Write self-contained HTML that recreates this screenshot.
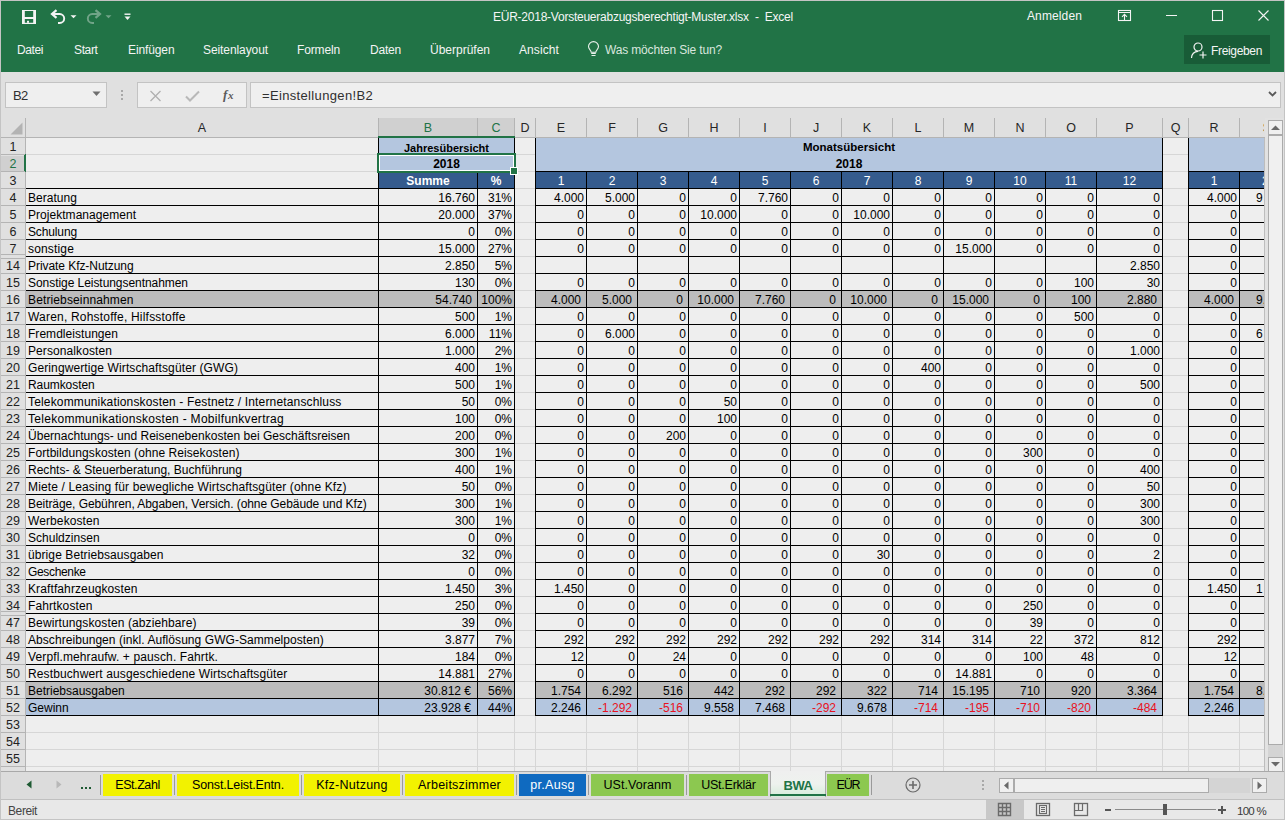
<!DOCTYPE html>
<html><head><meta charset="utf-8"><title>Excel</title>
<style>
html,body{margin:0;padding:0;}
body{width:1285px;height:820px;position:relative;overflow:hidden;font-family:"Liberation Sans", sans-serif;background:#c4c4c4;}
body>div,body>svg{position:absolute;}
body>div{white-space:pre;}
</style></head><body>
<div style="left:0px;top:0px;width:1285px;height:820px;background:#c4c4c4"></div>
<div style="left:1px;top:1px;width:1283px;height:71px;background:#217346"></div>
<div style="left:1px;top:72px;width:1283px;height:46px;background:#e0e0e0"></div>
<svg style="left:22px;top:10px;" width="14" height="14" viewBox="0 0 14 14"><path fill-rule="evenodd" d="M0 0H14V14H0ZM2.8 1.1H11.2V6.9H2.8ZM2.8 9H11.2V12.8H2.8Z" fill="#f4f4f4"/><rect x="5" y="10.8" width="2" height="2" fill="#f4f4f4"/></svg>
<svg style="left:50px;top:9px;" width="17" height="16" viewBox="0 0 17 16"><path d="M6.5 1.2L2 5L6.5 8.8" fill="none" stroke="#f4f4f4" stroke-width="2.2"/><path d="M2.5 5H9.7A4.5 4.5 0 0 1 9.7 14H8" fill="none" stroke="#f4f4f4" stroke-width="1.9"/></svg>
<svg style="left:70px;top:15px;" width="7" height="4" viewBox="0 0 7 4"><path d="M0.5 0.3H6.5L3.5 3.3Z" fill="#f4f4f4"/></svg>
<svg style="left:85px;top:9px;" width="17" height="16" viewBox="0 0 17 16"><g opacity="0.38"><path d="M10.5 1.2L15 5L10.5 8.8" fill="none" stroke="#f4f4f4" stroke-width="2.2"/><path d="M14.5 5H7.3A4.5 4.5 0 0 0 7.3 14H9" fill="none" stroke="#f4f4f4" stroke-width="1.9"/></g></svg>
<svg style="left:105px;top:15px;" width="7" height="4" viewBox="0 0 7 4"><path d="M0.5 0.3H6.5L3.5 3.3Z" fill="#f4f4f4" opacity="0.38"/></svg>
<svg style="left:124px;top:13px;" width="7" height="8" viewBox="0 0 7 8"><rect x="0.5" y="0.5" width="6" height="1.4" fill="#f4f4f4"/><path d="M0.5 3.5H6.5L3.5 7Z" fill="#f4f4f4"/></svg>
<div id="t1" style="letter-spacing:-0.241px;left:493px;top:9px;font-size:12px;line-height:17px;color:#f6f6f6;">EÜR-2018-Vorsteuerabzugsberechtigt-Muster.xlsx  -  Excel</div>
<div id="t2" style="letter-spacing:0.119px;left:1027px;top:8px;font-size:12px;line-height:17px;color:#f6f6f6;">Anmelden</div>
<svg style="left:1117px;top:9px;" width="15" height="13" viewBox="0 0 15 13"><rect x="1.5" y="1.5" width="12" height="10" fill="none" stroke="#f4f4f4" stroke-width="1.1"/><path d="M1.5 3.5H13.5" stroke="#f4f4f4" stroke-width="1"/><path d="M7.5 11V5.5M5 7.8L7.5 5.3L10 7.8" fill="none" stroke="#f4f4f4" stroke-width="1.1"/></svg>
<div style="left:1166px;top:15px;width:11px;height:1px;background:#f4f4f4"></div>
<svg style="left:1211px;top:9px;" width="13" height="13" viewBox="0 0 13 13"><rect x="1.5" y="1.5" width="10" height="10" fill="none" stroke="#f4f4f4" stroke-width="1.1"/></svg>
<svg style="left:1257px;top:9px;" width="13" height="13" viewBox="0 0 13 13"><path d="M1.5 1.5L11.5 11.5M11.5 1.5L1.5 11.5" stroke="#f4f4f4" stroke-width="1.1"/></svg>
<div id="t3" style="letter-spacing:-0.403px;left:17px;top:42px;font-size:12px;line-height:17px;color:#f4f4f4;">Datei</div>
<div id="t4" style="letter-spacing:-0.369px;left:74px;top:42px;font-size:12px;line-height:17px;color:#f4f4f4;">Start</div>
<div id="t5" style="letter-spacing:-0.109px;left:128px;top:42px;font-size:12px;line-height:17px;color:#f4f4f4;">Einfügen</div>
<div id="t6" style="letter-spacing:-0.087px;left:203px;top:42px;font-size:12px;line-height:17px;color:#f4f4f4;">Seitenlayout</div>
<div id="t7" style="letter-spacing:-0.145px;left:297px;top:42px;font-size:12px;line-height:17px;color:#f4f4f4;">Formeln</div>
<div id="t8" style="letter-spacing:-0.206px;left:370px;top:42px;font-size:12px;line-height:17px;color:#f4f4f4;">Daten</div>
<div id="t9" style="letter-spacing:-0.005px;left:430px;top:42px;font-size:12px;line-height:17px;color:#f4f4f4;">Überprüfen</div>
<div id="t10" style="letter-spacing:0.092px;left:519px;top:42px;font-size:12px;line-height:17px;color:#f4f4f4;">Ansicht</div>
<svg style="left:587px;top:41px;" width="13" height="17" viewBox="0 0 13 17"><path d="M4.2 11.2C4.2 9.2 1.5 8.3 1.5 5.6A5 5 0 0 1 11.5 5.6C11.5 8.3 8.8 9.2 8.8 11.2Z" fill="none" stroke="#e8f0ea" stroke-width="1.1"/><path d="M4.2 12.3H8.8M4.5 14.5H8.5" stroke="#e8f0ea" stroke-width="1.2"/></svg>
<div id="t11" style="letter-spacing:-0.164px;left:605px;top:42px;font-size:12px;line-height:17px;color:#d9e6de;">Was möchten Sie tun?</div>
<div style="left:1184px;top:35px;width:86px;height:29px;background:#185c37"></div>
<svg style="left:1190px;top:42px;" width="18" height="17" viewBox="0 0 18 17"><circle cx="8" cy="5" r="4" fill="none" stroke="#f4f4f4" stroke-width="1.2"/><path d="M1.5 16A6.5 6.5 0 0 1 8 9.3" fill="none" stroke="#f4f4f4" stroke-width="1.2"/><path d="M13 9.5V16.5M9.5 13H16.5" stroke="#f4f4f4" stroke-width="1.2"/></svg>
<div id="t12" style="letter-spacing:-0.339px;left:1211px;top:43px;font-size:12px;line-height:17px;color:#f6f6f6;">Freigeben</div>
<div style="left:5px;top:82px;width:102px;height:26px;background:#efefef;border:1px solid #c3c3c3;box-sizing:border-box"></div>
<div id="t13" style="letter-spacing:-0.703px;left:13px;top:87px;font-size:13px;line-height:17px;color:#303030;">B2</div>
<svg style="left:92px;top:91px;" width="9" height="6" viewBox="0 0 9 6"><path d="M0.5 0.5H8.5L4.5 5Z" fill="#6e6e6e"/></svg>
<div style="left:121px;top:90px;width:2px;height:2px;background:#a8a8a8"></div>
<div style="left:121px;top:94px;width:2px;height:2px;background:#a8a8a8"></div>
<div style="left:121px;top:98px;width:2px;height:2px;background:#a8a8a8"></div>
<div style="left:137px;top:82px;width:110px;height:26px;background:#efefef;border:1px solid #c3c3c3;box-sizing:border-box"></div>
<svg style="left:149px;top:90px;" width="13" height="12" viewBox="0 0 13 12"><path d="M1.5 1L11.5 11M11.5 1L1.5 11" stroke="#b0b0b0" stroke-width="1.3"/></svg>
<svg style="left:185px;top:90px;" width="15" height="12" viewBox="0 0 15 12"><path d="M1 6.5L5 10.5L14 1.5" fill="none" stroke="#b8b8b8" stroke-width="2"/></svg>
<div style="left:223px;top:86px;font-size:13px;line-height:17px;color:#5a5a5a;font-family:'Liberation Serif',serif;font-style:italic;font-weight:bold">f</div>
<div style="left:228px;top:87px;font-size:11px;line-height:17px;color:#5a5a5a;font-family:'Liberation Serif',serif;font-style:italic;font-weight:bold">x</div>
<div style="left:250px;top:82px;width:1031px;height:26px;background:#efefef;border:1px solid #c3c3c3;box-sizing:border-box"></div>
<div id="t14" style="letter-spacing:0.343px;left:262px;top:87px;font-size:13px;line-height:17px;color:#303030;">=Einstellungen!B2</div>
<svg style="left:1268px;top:91px;" width="9" height="7" viewBox="0 0 9 7"><path d="M1 1L4.5 4.5L8 1" fill="none" stroke="#5a5a5a" stroke-width="1.8"/></svg>
<div style="left:1px;top:118px;width:1263px;height:19px;background:#e0e0e0"></div>
<div style="left:1px;top:138px;width:24px;height:633px;background:#e0e0e0"></div>
<div style="left:26px;top:138px;width:1238px;height:633px;background:#eeeeee"></div>
<div style="left:1265px;top:118px;width:19px;height:681px;background:#e2e2e2"></div>
<div style="left:379px;top:118px;width:135px;height:19px;background:#d0d0d0"></div>
<div style="left:1px;top:156px;width:23px;height:16px;background:#d0d0d0"></div>
<svg style="left:10px;top:122px;" width="13" height="13" viewBox="0 0 13 13"><path d="M12.5 0.5V12.5H0.5Z" fill="#b3b3b3"/></svg>
<div style="left:378px;top:118px;width:1px;height:19px;background:#b4b4b4"></div>
<div style="left:477px;top:118px;width:1px;height:19px;background:#b4b4b4"></div>
<div style="left:514px;top:118px;width:1px;height:19px;background:#b4b4b4"></div>
<div style="left:535px;top:118px;width:1px;height:19px;background:#b4b4b4"></div>
<div style="left:586px;top:118px;width:1px;height:19px;background:#b4b4b4"></div>
<div style="left:637px;top:118px;width:1px;height:19px;background:#b4b4b4"></div>
<div style="left:688px;top:118px;width:1px;height:19px;background:#b4b4b4"></div>
<div style="left:739px;top:118px;width:1px;height:19px;background:#b4b4b4"></div>
<div style="left:790px;top:118px;width:1px;height:19px;background:#b4b4b4"></div>
<div style="left:841px;top:118px;width:1px;height:19px;background:#b4b4b4"></div>
<div style="left:892px;top:118px;width:1px;height:19px;background:#b4b4b4"></div>
<div style="left:943px;top:118px;width:1px;height:19px;background:#b4b4b4"></div>
<div style="left:994px;top:118px;width:1px;height:19px;background:#b4b4b4"></div>
<div style="left:1045px;top:118px;width:1px;height:19px;background:#b4b4b4"></div>
<div style="left:1096px;top:118px;width:1px;height:19px;background:#b4b4b4"></div>
<div style="left:1162px;top:118px;width:1px;height:19px;background:#b4b4b4"></div>
<div style="left:1188px;top:118px;width:1px;height:19px;background:#b4b4b4"></div>
<div style="left:1239px;top:118px;width:1px;height:19px;background:#b4b4b4"></div>
<div style="left:25px;top:118px;width:1px;height:653px;background:#b4b4b4"></div>
<div style="left:1px;top:137px;width:1264px;height:1px;background:#b4b4b4"></div>
<div style="left:378px;top:136px;width:137px;height:2px;background:#217346"></div>
<div style="left:24px;top:154px;width:2px;height:18px;background:#217346"></div>
<div style="left:1px;top:154px;width:24px;height:1px;background:#b4b4b4"></div>
<div style="left:1px;top:139px;font-size:12.5px;line-height:17px;color:#222;width:24px;text-align:center;">1</div>
<div style="left:1px;top:171px;width:24px;height:1px;background:#b4b4b4"></div>
<div style="left:1px;top:156px;font-size:12.5px;line-height:17px;color:#217346;width:24px;text-align:center;">2</div>
<div style="left:1px;top:188px;width:24px;height:1px;background:#b4b4b4"></div>
<div style="left:1px;top:173px;font-size:12.5px;line-height:17px;color:#222;width:24px;text-align:center;">3</div>
<div style="left:1px;top:205px;width:24px;height:1px;background:#b4b4b4"></div>
<div style="left:1px;top:190px;font-size:12.5px;line-height:17px;color:#222;width:24px;text-align:center;">4</div>
<div style="left:1px;top:222px;width:24px;height:1px;background:#b4b4b4"></div>
<div style="left:1px;top:207px;font-size:12.5px;line-height:17px;color:#222;width:24px;text-align:center;">5</div>
<div style="left:1px;top:239px;width:24px;height:1px;background:#b4b4b4"></div>
<div style="left:1px;top:224px;font-size:12.5px;line-height:17px;color:#222;width:24px;text-align:center;">6</div>
<div style="left:1px;top:254px;width:24px;height:1px;background:#b4b4b4"></div>
<div style="left:1px;top:258px;width:24px;height:1px;background:#b4b4b4"></div>
<div style="left:1px;top:241px;font-size:12.5px;line-height:17px;color:#222;width:24px;text-align:center;">7</div>
<div style="left:1px;top:273px;width:24px;height:1px;background:#b4b4b4"></div>
<div style="left:1px;top:258px;font-size:12.5px;line-height:17px;color:#222;width:24px;text-align:center;">14</div>
<div style="left:1px;top:290px;width:24px;height:1px;background:#b4b4b4"></div>
<div style="left:1px;top:275px;font-size:12.5px;line-height:17px;color:#222;width:24px;text-align:center;">15</div>
<div style="left:1px;top:307px;width:24px;height:1px;background:#b4b4b4"></div>
<div style="left:1px;top:292px;font-size:12.5px;line-height:17px;color:#222;width:24px;text-align:center;">16</div>
<div style="left:1px;top:324px;width:24px;height:1px;background:#b4b4b4"></div>
<div style="left:1px;top:309px;font-size:12.5px;line-height:17px;color:#222;width:24px;text-align:center;">17</div>
<div style="left:1px;top:341px;width:24px;height:1px;background:#b4b4b4"></div>
<div style="left:1px;top:326px;font-size:12.5px;line-height:17px;color:#222;width:24px;text-align:center;">18</div>
<div style="left:1px;top:358px;width:24px;height:1px;background:#b4b4b4"></div>
<div style="left:1px;top:343px;font-size:12.5px;line-height:17px;color:#222;width:24px;text-align:center;">19</div>
<div style="left:1px;top:375px;width:24px;height:1px;background:#b4b4b4"></div>
<div style="left:1px;top:360px;font-size:12.5px;line-height:17px;color:#222;width:24px;text-align:center;">20</div>
<div style="left:1px;top:392px;width:24px;height:1px;background:#b4b4b4"></div>
<div style="left:1px;top:377px;font-size:12.5px;line-height:17px;color:#222;width:24px;text-align:center;">21</div>
<div style="left:1px;top:409px;width:24px;height:1px;background:#b4b4b4"></div>
<div style="left:1px;top:394px;font-size:12.5px;line-height:17px;color:#222;width:24px;text-align:center;">22</div>
<div style="left:1px;top:426px;width:24px;height:1px;background:#b4b4b4"></div>
<div style="left:1px;top:411px;font-size:12.5px;line-height:17px;color:#222;width:24px;text-align:center;">23</div>
<div style="left:1px;top:443px;width:24px;height:1px;background:#b4b4b4"></div>
<div style="left:1px;top:428px;font-size:12.5px;line-height:17px;color:#222;width:24px;text-align:center;">24</div>
<div style="left:1px;top:460px;width:24px;height:1px;background:#b4b4b4"></div>
<div style="left:1px;top:445px;font-size:12.5px;line-height:17px;color:#222;width:24px;text-align:center;">25</div>
<div style="left:1px;top:477px;width:24px;height:1px;background:#b4b4b4"></div>
<div style="left:1px;top:462px;font-size:12.5px;line-height:17px;color:#222;width:24px;text-align:center;">26</div>
<div style="left:1px;top:494px;width:24px;height:1px;background:#b4b4b4"></div>
<div style="left:1px;top:479px;font-size:12.5px;line-height:17px;color:#222;width:24px;text-align:center;">27</div>
<div style="left:1px;top:511px;width:24px;height:1px;background:#b4b4b4"></div>
<div style="left:1px;top:496px;font-size:12.5px;line-height:17px;color:#222;width:24px;text-align:center;">28</div>
<div style="left:1px;top:528px;width:24px;height:1px;background:#b4b4b4"></div>
<div style="left:1px;top:513px;font-size:12.5px;line-height:17px;color:#222;width:24px;text-align:center;">29</div>
<div style="left:1px;top:545px;width:24px;height:1px;background:#b4b4b4"></div>
<div style="left:1px;top:530px;font-size:12.5px;line-height:17px;color:#222;width:24px;text-align:center;">30</div>
<div style="left:1px;top:562px;width:24px;height:1px;background:#b4b4b4"></div>
<div style="left:1px;top:547px;font-size:12.5px;line-height:17px;color:#222;width:24px;text-align:center;">31</div>
<div style="left:1px;top:579px;width:24px;height:1px;background:#b4b4b4"></div>
<div style="left:1px;top:564px;font-size:12.5px;line-height:17px;color:#222;width:24px;text-align:center;">32</div>
<div style="left:1px;top:596px;width:24px;height:1px;background:#b4b4b4"></div>
<div style="left:1px;top:581px;font-size:12.5px;line-height:17px;color:#222;width:24px;text-align:center;">33</div>
<div style="left:1px;top:611px;width:24px;height:1px;background:#b4b4b4"></div>
<div style="left:1px;top:615px;width:24px;height:1px;background:#b4b4b4"></div>
<div style="left:1px;top:598px;font-size:12.5px;line-height:17px;color:#222;width:24px;text-align:center;">34</div>
<div style="left:1px;top:630px;width:24px;height:1px;background:#b4b4b4"></div>
<div style="left:1px;top:615px;font-size:12.5px;line-height:17px;color:#222;width:24px;text-align:center;">47</div>
<div style="left:1px;top:647px;width:24px;height:1px;background:#b4b4b4"></div>
<div style="left:1px;top:632px;font-size:12.5px;line-height:17px;color:#222;width:24px;text-align:center;">48</div>
<div style="left:1px;top:664px;width:24px;height:1px;background:#b4b4b4"></div>
<div style="left:1px;top:649px;font-size:12.5px;line-height:17px;color:#222;width:24px;text-align:center;">49</div>
<div style="left:1px;top:681px;width:24px;height:1px;background:#b4b4b4"></div>
<div style="left:1px;top:666px;font-size:12.5px;line-height:17px;color:#222;width:24px;text-align:center;">50</div>
<div style="left:1px;top:698px;width:24px;height:1px;background:#b4b4b4"></div>
<div style="left:1px;top:683px;font-size:12.5px;line-height:17px;color:#222;width:24px;text-align:center;">51</div>
<div style="left:1px;top:715px;width:24px;height:1px;background:#b4b4b4"></div>
<div style="left:1px;top:700px;font-size:12.5px;line-height:17px;color:#222;width:24px;text-align:center;">52</div>
<div style="left:1px;top:732px;width:24px;height:1px;background:#b4b4b4"></div>
<div style="left:1px;top:717px;font-size:12.5px;line-height:17px;color:#222;width:24px;text-align:center;">53</div>
<div style="left:1px;top:749px;width:24px;height:1px;background:#b4b4b4"></div>
<div style="left:1px;top:734px;font-size:12.5px;line-height:17px;color:#222;width:24px;text-align:center;">54</div>
<div style="left:1px;top:766px;width:24px;height:1px;background:#b4b4b4"></div>
<div style="left:1px;top:751px;font-size:12.5px;line-height:17px;color:#222;width:24px;text-align:center;">55</div>
<div style="left:1px;top:771px;width:24px;height:1px;background:#b4b4b4"></div>
<div style="left:26px;top:154px;width:1238px;height:1px;background:#d6d6d6"></div>
<div style="left:26px;top:171px;width:1238px;height:1px;background:#d6d6d6"></div>
<div style="left:26px;top:188px;width:1238px;height:1px;background:#d6d6d6"></div>
<div style="left:26px;top:205px;width:1238px;height:1px;background:#d6d6d6"></div>
<div style="left:26px;top:222px;width:1238px;height:1px;background:#d6d6d6"></div>
<div style="left:26px;top:239px;width:1238px;height:1px;background:#d6d6d6"></div>
<div style="left:26px;top:256px;width:1238px;height:1px;background:#d6d6d6"></div>
<div style="left:26px;top:273px;width:1238px;height:1px;background:#d6d6d6"></div>
<div style="left:26px;top:290px;width:1238px;height:1px;background:#d6d6d6"></div>
<div style="left:26px;top:307px;width:1238px;height:1px;background:#d6d6d6"></div>
<div style="left:26px;top:324px;width:1238px;height:1px;background:#d6d6d6"></div>
<div style="left:26px;top:341px;width:1238px;height:1px;background:#d6d6d6"></div>
<div style="left:26px;top:358px;width:1238px;height:1px;background:#d6d6d6"></div>
<div style="left:26px;top:375px;width:1238px;height:1px;background:#d6d6d6"></div>
<div style="left:26px;top:392px;width:1238px;height:1px;background:#d6d6d6"></div>
<div style="left:26px;top:409px;width:1238px;height:1px;background:#d6d6d6"></div>
<div style="left:26px;top:426px;width:1238px;height:1px;background:#d6d6d6"></div>
<div style="left:26px;top:443px;width:1238px;height:1px;background:#d6d6d6"></div>
<div style="left:26px;top:460px;width:1238px;height:1px;background:#d6d6d6"></div>
<div style="left:26px;top:477px;width:1238px;height:1px;background:#d6d6d6"></div>
<div style="left:26px;top:494px;width:1238px;height:1px;background:#d6d6d6"></div>
<div style="left:26px;top:511px;width:1238px;height:1px;background:#d6d6d6"></div>
<div style="left:26px;top:528px;width:1238px;height:1px;background:#d6d6d6"></div>
<div style="left:26px;top:545px;width:1238px;height:1px;background:#d6d6d6"></div>
<div style="left:26px;top:562px;width:1238px;height:1px;background:#d6d6d6"></div>
<div style="left:26px;top:579px;width:1238px;height:1px;background:#d6d6d6"></div>
<div style="left:26px;top:596px;width:1238px;height:1px;background:#d6d6d6"></div>
<div style="left:26px;top:613px;width:1238px;height:1px;background:#d6d6d6"></div>
<div style="left:26px;top:630px;width:1238px;height:1px;background:#d6d6d6"></div>
<div style="left:26px;top:647px;width:1238px;height:1px;background:#d6d6d6"></div>
<div style="left:26px;top:664px;width:1238px;height:1px;background:#d6d6d6"></div>
<div style="left:26px;top:681px;width:1238px;height:1px;background:#d6d6d6"></div>
<div style="left:26px;top:698px;width:1238px;height:1px;background:#d6d6d6"></div>
<div style="left:26px;top:715px;width:1238px;height:1px;background:#d6d6d6"></div>
<div style="left:26px;top:732px;width:1238px;height:1px;background:#d6d6d6"></div>
<div style="left:26px;top:749px;width:1238px;height:1px;background:#d6d6d6"></div>
<div style="left:26px;top:766px;width:1238px;height:1px;background:#d6d6d6"></div>
<div style="left:378px;top:138px;width:1px;height:633px;background:#d6d6d6"></div>
<div style="left:477px;top:138px;width:1px;height:633px;background:#d6d6d6"></div>
<div style="left:514px;top:138px;width:1px;height:633px;background:#d6d6d6"></div>
<div style="left:535px;top:138px;width:1px;height:633px;background:#d6d6d6"></div>
<div style="left:586px;top:138px;width:1px;height:633px;background:#d6d6d6"></div>
<div style="left:637px;top:138px;width:1px;height:633px;background:#d6d6d6"></div>
<div style="left:688px;top:138px;width:1px;height:633px;background:#d6d6d6"></div>
<div style="left:739px;top:138px;width:1px;height:633px;background:#d6d6d6"></div>
<div style="left:790px;top:138px;width:1px;height:633px;background:#d6d6d6"></div>
<div style="left:841px;top:138px;width:1px;height:633px;background:#d6d6d6"></div>
<div style="left:892px;top:138px;width:1px;height:633px;background:#d6d6d6"></div>
<div style="left:943px;top:138px;width:1px;height:633px;background:#d6d6d6"></div>
<div style="left:994px;top:138px;width:1px;height:633px;background:#d6d6d6"></div>
<div style="left:1045px;top:138px;width:1px;height:633px;background:#d6d6d6"></div>
<div style="left:1096px;top:138px;width:1px;height:633px;background:#d6d6d6"></div>
<div style="left:1162px;top:138px;width:1px;height:633px;background:#d6d6d6"></div>
<div style="left:1188px;top:138px;width:1px;height:633px;background:#d6d6d6"></div>
<div style="left:1239px;top:138px;width:1px;height:633px;background:#d6d6d6"></div>
<div style="left:26px;top:119px;font-size:12.5px;line-height:19px;color:#262626;width:352px;text-align:center;">A</div>
<div style="left:379px;top:119px;font-size:12.5px;line-height:19px;color:#217346;width:98px;text-align:center;">B</div>
<div style="left:478px;top:119px;font-size:12.5px;line-height:19px;color:#217346;width:36px;text-align:center;">C</div>
<div style="left:515px;top:119px;font-size:12.5px;line-height:19px;color:#262626;width:20px;text-align:center;">D</div>
<div style="left:536px;top:119px;font-size:12.5px;line-height:19px;color:#262626;width:50px;text-align:center;">E</div>
<div style="left:587px;top:119px;font-size:12.5px;line-height:19px;color:#262626;width:50px;text-align:center;">F</div>
<div style="left:638px;top:119px;font-size:12.5px;line-height:19px;color:#262626;width:50px;text-align:center;">G</div>
<div style="left:689px;top:119px;font-size:12.5px;line-height:19px;color:#262626;width:50px;text-align:center;">H</div>
<div style="left:740px;top:119px;font-size:12.5px;line-height:19px;color:#262626;width:50px;text-align:center;">I</div>
<div style="left:791px;top:119px;font-size:12.5px;line-height:19px;color:#262626;width:50px;text-align:center;">J</div>
<div style="left:842px;top:119px;font-size:12.5px;line-height:19px;color:#262626;width:50px;text-align:center;">K</div>
<div style="left:893px;top:119px;font-size:12.5px;line-height:19px;color:#262626;width:50px;text-align:center;">L</div>
<div style="left:944px;top:119px;font-size:12.5px;line-height:19px;color:#262626;width:50px;text-align:center;">M</div>
<div style="left:995px;top:119px;font-size:12.5px;line-height:19px;color:#262626;width:50px;text-align:center;">N</div>
<div style="left:1046px;top:119px;font-size:12.5px;line-height:19px;color:#262626;width:50px;text-align:center;">O</div>
<div style="left:1097px;top:119px;font-size:12.5px;line-height:19px;color:#262626;width:65px;text-align:center;">P</div>
<div style="left:1163px;top:119px;font-size:12.5px;line-height:19px;color:#262626;width:25px;text-align:center;">Q</div>
<div style="left:1189px;top:119px;font-size:12.5px;line-height:19px;color:#262626;width:50px;text-align:center;">R</div>
<div style="left:1242px;top:119px;font-size:12.5px;line-height:19px;color:#262626;width:50px;text-align:center;">S</div>
<div style="left:379px;top:138px;width:135px;height:33px;background:#b4c6df"></div>
<div style="left:536px;top:138px;width:626px;height:33px;background:#b4c6df"></div>
<div style="left:1189px;top:138px;width:75px;height:33px;background:#b4c6df"></div>
<div style="left:379px;top:172px;width:135px;height:16px;background:#355b8d"></div>
<div style="left:536px;top:172px;width:626px;height:16px;background:#355b8d"></div>
<div style="left:1189px;top:172px;width:75px;height:16px;background:#355b8d"></div>
<div style="left:26px;top:291px;width:488px;height:16px;background:#bcbcbc"></div>
<div style="left:536px;top:291px;width:626px;height:16px;background:#bcbcbc"></div>
<div style="left:1189px;top:291px;width:75px;height:16px;background:#bcbcbc"></div>
<div style="left:26px;top:682px;width:488px;height:16px;background:#bcbcbc"></div>
<div style="left:536px;top:682px;width:626px;height:16px;background:#bcbcbc"></div>
<div style="left:1189px;top:682px;width:75px;height:16px;background:#bcbcbc"></div>
<div style="left:26px;top:699px;width:488px;height:16px;background:#b4c6df"></div>
<div style="left:536px;top:699px;width:626px;height:16px;background:#b4c6df"></div>
<div style="left:1189px;top:699px;width:75px;height:16px;background:#b4c6df"></div>
<div style="left:26px;top:205px;width:489px;height:1px;background:#000"></div>
<div style="left:26px;top:222px;width:489px;height:1px;background:#000"></div>
<div style="left:26px;top:239px;width:489px;height:1px;background:#000"></div>
<div style="left:26px;top:256px;width:489px;height:1px;background:#000"></div>
<div style="left:26px;top:273px;width:489px;height:1px;background:#000"></div>
<div style="left:26px;top:290px;width:489px;height:1px;background:#000"></div>
<div style="left:26px;top:307px;width:489px;height:1px;background:#000"></div>
<div style="left:26px;top:324px;width:489px;height:1px;background:#000"></div>
<div style="left:26px;top:341px;width:489px;height:1px;background:#000"></div>
<div style="left:26px;top:358px;width:489px;height:1px;background:#000"></div>
<div style="left:26px;top:375px;width:489px;height:1px;background:#000"></div>
<div style="left:26px;top:392px;width:489px;height:1px;background:#000"></div>
<div style="left:26px;top:409px;width:489px;height:1px;background:#000"></div>
<div style="left:26px;top:426px;width:489px;height:1px;background:#000"></div>
<div style="left:26px;top:443px;width:489px;height:1px;background:#000"></div>
<div style="left:26px;top:460px;width:489px;height:1px;background:#000"></div>
<div style="left:26px;top:477px;width:489px;height:1px;background:#000"></div>
<div style="left:26px;top:494px;width:489px;height:1px;background:#000"></div>
<div style="left:26px;top:511px;width:489px;height:1px;background:#000"></div>
<div style="left:26px;top:528px;width:489px;height:1px;background:#000"></div>
<div style="left:26px;top:545px;width:489px;height:1px;background:#000"></div>
<div style="left:26px;top:562px;width:489px;height:1px;background:#000"></div>
<div style="left:26px;top:579px;width:489px;height:1px;background:#000"></div>
<div style="left:26px;top:596px;width:489px;height:1px;background:#000"></div>
<div style="left:26px;top:613px;width:489px;height:1px;background:#000"></div>
<div style="left:26px;top:630px;width:489px;height:1px;background:#000"></div>
<div style="left:26px;top:647px;width:489px;height:1px;background:#000"></div>
<div style="left:26px;top:664px;width:489px;height:1px;background:#000"></div>
<div style="left:26px;top:681px;width:489px;height:1px;background:#000"></div>
<div style="left:26px;top:698px;width:489px;height:1px;background:#000"></div>
<div style="left:26px;top:715px;width:489px;height:1px;background:#000"></div>
<div style="left:26px;top:188px;width:489px;height:1px;background:#000"></div>
<div style="left:378px;top:188px;width:1px;height:528px;background:#000"></div>
<div style="left:477px;top:188px;width:1px;height:528px;background:#000"></div>
<div style="left:514px;top:188px;width:1px;height:528px;background:#000"></div>
<div style="left:535px;top:188px;width:628px;height:1px;background:#000"></div>
<div style="left:535px;top:205px;width:628px;height:1px;background:#000"></div>
<div style="left:535px;top:222px;width:628px;height:1px;background:#000"></div>
<div style="left:535px;top:239px;width:628px;height:1px;background:#000"></div>
<div style="left:535px;top:256px;width:628px;height:1px;background:#000"></div>
<div style="left:535px;top:273px;width:628px;height:1px;background:#000"></div>
<div style="left:535px;top:290px;width:628px;height:1px;background:#000"></div>
<div style="left:535px;top:307px;width:628px;height:1px;background:#000"></div>
<div style="left:535px;top:324px;width:628px;height:1px;background:#000"></div>
<div style="left:535px;top:341px;width:628px;height:1px;background:#000"></div>
<div style="left:535px;top:358px;width:628px;height:1px;background:#000"></div>
<div style="left:535px;top:375px;width:628px;height:1px;background:#000"></div>
<div style="left:535px;top:392px;width:628px;height:1px;background:#000"></div>
<div style="left:535px;top:409px;width:628px;height:1px;background:#000"></div>
<div style="left:535px;top:426px;width:628px;height:1px;background:#000"></div>
<div style="left:535px;top:443px;width:628px;height:1px;background:#000"></div>
<div style="left:535px;top:460px;width:628px;height:1px;background:#000"></div>
<div style="left:535px;top:477px;width:628px;height:1px;background:#000"></div>
<div style="left:535px;top:494px;width:628px;height:1px;background:#000"></div>
<div style="left:535px;top:511px;width:628px;height:1px;background:#000"></div>
<div style="left:535px;top:528px;width:628px;height:1px;background:#000"></div>
<div style="left:535px;top:545px;width:628px;height:1px;background:#000"></div>
<div style="left:535px;top:562px;width:628px;height:1px;background:#000"></div>
<div style="left:535px;top:579px;width:628px;height:1px;background:#000"></div>
<div style="left:535px;top:596px;width:628px;height:1px;background:#000"></div>
<div style="left:535px;top:613px;width:628px;height:1px;background:#000"></div>
<div style="left:535px;top:630px;width:628px;height:1px;background:#000"></div>
<div style="left:535px;top:647px;width:628px;height:1px;background:#000"></div>
<div style="left:535px;top:664px;width:628px;height:1px;background:#000"></div>
<div style="left:535px;top:681px;width:628px;height:1px;background:#000"></div>
<div style="left:535px;top:698px;width:628px;height:1px;background:#000"></div>
<div style="left:535px;top:715px;width:628px;height:1px;background:#000"></div>
<div style="left:535px;top:171px;width:628px;height:1px;background:#000"></div>
<div style="left:586px;top:171px;width:1px;height:545px;background:#000"></div>
<div style="left:637px;top:171px;width:1px;height:545px;background:#000"></div>
<div style="left:688px;top:171px;width:1px;height:545px;background:#000"></div>
<div style="left:739px;top:171px;width:1px;height:545px;background:#000"></div>
<div style="left:790px;top:171px;width:1px;height:545px;background:#000"></div>
<div style="left:841px;top:171px;width:1px;height:545px;background:#000"></div>
<div style="left:892px;top:171px;width:1px;height:545px;background:#000"></div>
<div style="left:943px;top:171px;width:1px;height:545px;background:#000"></div>
<div style="left:994px;top:171px;width:1px;height:545px;background:#000"></div>
<div style="left:1045px;top:171px;width:1px;height:545px;background:#000"></div>
<div style="left:1096px;top:171px;width:1px;height:545px;background:#000"></div>
<div style="left:1162px;top:171px;width:1px;height:545px;background:#000"></div>
<div style="left:535px;top:171px;width:1px;height:545px;background:#000"></div>
<div style="left:1188px;top:188px;width:76px;height:1px;background:#000"></div>
<div style="left:1188px;top:205px;width:76px;height:1px;background:#000"></div>
<div style="left:1188px;top:222px;width:76px;height:1px;background:#000"></div>
<div style="left:1188px;top:239px;width:76px;height:1px;background:#000"></div>
<div style="left:1188px;top:256px;width:76px;height:1px;background:#000"></div>
<div style="left:1188px;top:273px;width:76px;height:1px;background:#000"></div>
<div style="left:1188px;top:290px;width:76px;height:1px;background:#000"></div>
<div style="left:1188px;top:307px;width:76px;height:1px;background:#000"></div>
<div style="left:1188px;top:324px;width:76px;height:1px;background:#000"></div>
<div style="left:1188px;top:341px;width:76px;height:1px;background:#000"></div>
<div style="left:1188px;top:358px;width:76px;height:1px;background:#000"></div>
<div style="left:1188px;top:375px;width:76px;height:1px;background:#000"></div>
<div style="left:1188px;top:392px;width:76px;height:1px;background:#000"></div>
<div style="left:1188px;top:409px;width:76px;height:1px;background:#000"></div>
<div style="left:1188px;top:426px;width:76px;height:1px;background:#000"></div>
<div style="left:1188px;top:443px;width:76px;height:1px;background:#000"></div>
<div style="left:1188px;top:460px;width:76px;height:1px;background:#000"></div>
<div style="left:1188px;top:477px;width:76px;height:1px;background:#000"></div>
<div style="left:1188px;top:494px;width:76px;height:1px;background:#000"></div>
<div style="left:1188px;top:511px;width:76px;height:1px;background:#000"></div>
<div style="left:1188px;top:528px;width:76px;height:1px;background:#000"></div>
<div style="left:1188px;top:545px;width:76px;height:1px;background:#000"></div>
<div style="left:1188px;top:562px;width:76px;height:1px;background:#000"></div>
<div style="left:1188px;top:579px;width:76px;height:1px;background:#000"></div>
<div style="left:1188px;top:596px;width:76px;height:1px;background:#000"></div>
<div style="left:1188px;top:613px;width:76px;height:1px;background:#000"></div>
<div style="left:1188px;top:630px;width:76px;height:1px;background:#000"></div>
<div style="left:1188px;top:647px;width:76px;height:1px;background:#000"></div>
<div style="left:1188px;top:664px;width:76px;height:1px;background:#000"></div>
<div style="left:1188px;top:681px;width:76px;height:1px;background:#000"></div>
<div style="left:1188px;top:698px;width:76px;height:1px;background:#000"></div>
<div style="left:1188px;top:715px;width:76px;height:1px;background:#000"></div>
<div style="left:1188px;top:171px;width:76px;height:1px;background:#000"></div>
<div style="left:1239px;top:171px;width:1px;height:545px;background:#000"></div>
<div style="left:1188px;top:171px;width:1px;height:545px;background:#000"></div>
<div style="left:378px;top:171px;width:137px;height:1px;background:#000"></div>
<div style="left:378px;top:171px;width:1px;height:18px;background:#000"></div>
<div style="left:477px;top:171px;width:1px;height:18px;background:#000"></div>
<div style="left:514px;top:171px;width:1px;height:18px;background:#000"></div>
<div style="left:378px;top:138px;width:1px;height:34px;background:#000"></div>
<div style="left:514px;top:138px;width:1px;height:34px;background:#000"></div>
<div style="left:535px;top:138px;width:1px;height:34px;background:#000"></div>
<div style="left:1162px;top:138px;width:1px;height:34px;background:#000"></div>
<div style="left:1188px;top:138px;width:1px;height:34px;background:#000"></div>
<div id="t15" style="letter-spacing:0.037px;left:28px;top:190px;font-size:12px;line-height:16px;color:#000;">Beratung</div>
<div id="t16" style="letter-spacing:0.036px;left:28px;top:207px;font-size:12px;line-height:16px;color:#000;">Projektmanagement</div>
<div id="t17" style="letter-spacing:-0.131px;left:28px;top:224px;font-size:12px;line-height:16px;color:#000;">Schulung</div>
<div id="t18" style="letter-spacing:0.162px;left:28px;top:241px;font-size:12px;line-height:16px;color:#000;">sonstige</div>
<div id="t19" style="letter-spacing:-0.059px;left:28px;top:258px;font-size:12px;line-height:16px;color:#000;">Private Kfz-Nutzung</div>
<div id="t20" style="letter-spacing:-0.054px;left:28px;top:275px;font-size:12px;line-height:16px;color:#000;">Sonstige Leistungsentnahmen</div>
<div id="t21" style="letter-spacing:0.129px;left:28px;top:292px;font-size:12px;line-height:16px;color:#000;">Betriebseinnahmen</div>
<div id="t22" style="letter-spacing:0.201px;left:28px;top:309px;font-size:12px;line-height:16px;color:#000;">Waren, Rohstoffe, Hilfsstoffe</div>
<div id="t23" style="letter-spacing:0.041px;left:28px;top:326px;font-size:12px;line-height:16px;color:#000;">Fremdleistungen</div>
<div id="t24" style="letter-spacing:0.092px;left:28px;top:343px;font-size:12px;line-height:16px;color:#000;">Personalkosten</div>
<div id="t25" style="letter-spacing:0.110px;left:28px;top:360px;font-size:12px;line-height:16px;color:#000;">Geringwertige Wirtschaftsgüter (GWG)</div>
<div id="t26" style="letter-spacing:-0.078px;left:28px;top:377px;font-size:12px;line-height:16px;color:#000;">Raumkosten</div>
<div id="t27" style="letter-spacing:0.158px;left:28px;top:394px;font-size:12px;line-height:16px;color:#000;">Telekommunikationskosten - Festnetz / Internetanschluss</div>
<div id="t28" style="letter-spacing:0.292px;left:28px;top:411px;font-size:12px;line-height:16px;color:#000;">Telekommunikationskosten - Mobilfunkvertrag</div>
<div id="t29" style="letter-spacing:0.020px;left:28px;top:428px;font-size:12px;line-height:16px;color:#000;">Übernachtungs- und Reisenebenkosten bei Geschäftsreisen</div>
<div id="t30" style="letter-spacing:0.073px;left:28px;top:445px;font-size:12px;line-height:16px;color:#000;">Fortbildungskosten (ohne Reisekosten)</div>
<div id="t31" style="letter-spacing:0.014px;left:28px;top:462px;font-size:12px;line-height:16px;color:#000;">Rechts- &amp; Steuerberatung, Buchführung</div>
<div id="t32" style="letter-spacing:0.133px;left:28px;top:479px;font-size:12px;line-height:16px;color:#000;">Miete / Leasing für bewegliche Wirtschaftsgüter (ohne Kfz)</div>
<div id="t33" style="letter-spacing:-0.072px;left:28px;top:496px;font-size:12px;line-height:16px;color:#000;">Beiträge, Gebühren, Abgaben, Versich. (ohne Gebäude und Kfz)</div>
<div id="t34" style="letter-spacing:0.101px;left:28px;top:513px;font-size:12px;line-height:16px;color:#000;">Werbekosten</div>
<div id="t35" style="letter-spacing:0.017px;left:28px;top:530px;font-size:12px;line-height:16px;color:#000;">Schuldzinsen</div>
<div id="t36" style="letter-spacing:0.090px;left:28px;top:547px;font-size:12px;line-height:16px;color:#000;">übrige Betriebsausgaben</div>
<div id="t37" style="letter-spacing:-0.334px;left:28px;top:564px;font-size:12px;line-height:16px;color:#000;">Geschenke</div>
<div id="t38" style="letter-spacing:0.110px;left:28px;top:581px;font-size:12px;line-height:16px;color:#000;">Kraftfahrzeugkosten</div>
<div id="t39" style="letter-spacing:0.102px;left:28px;top:598px;font-size:12px;line-height:16px;color:#000;">Fahrtkosten</div>
<div id="t40" style="letter-spacing:0.110px;left:28px;top:615px;font-size:12px;line-height:16px;color:#000;">Bewirtungskosten (abziehbare)</div>
<div id="t41" style="letter-spacing:0.061px;left:28px;top:632px;font-size:12px;line-height:16px;color:#000;">Abschreibungen (inkl. Auflösung GWG-Sammelposten)</div>
<div id="t42" style="letter-spacing:0.125px;left:28px;top:649px;font-size:12px;line-height:16px;color:#000;">Verpfl.mehraufw. + pausch. Fahrtk.</div>
<div id="t43" style="letter-spacing:0.120px;left:28px;top:666px;font-size:12px;line-height:16px;color:#000;">Restbuchwert ausgeschiedene Wirtschaftsgüter</div>
<div style="left:28px;top:683px;font-size:12px;line-height:16px;color:#000;">Betriebsausgaben</div>
<div style="left:28px;top:700px;font-size:12px;line-height:16px;color:#000;">Gewinn</div>
<div style="left:379px;top:190px;font-size:12px;line-height:16px;color:#000;width:96px;text-align:right;">16.760</div>
<div style="left:478px;top:190px;font-size:12px;line-height:16px;color:#000;width:34px;text-align:right;">31%</div>
<div style="left:379px;top:207px;font-size:12px;line-height:16px;color:#000;width:96px;text-align:right;">20.000</div>
<div style="left:478px;top:207px;font-size:12px;line-height:16px;color:#000;width:34px;text-align:right;">37%</div>
<div style="left:379px;top:224px;font-size:12px;line-height:16px;color:#000;width:96px;text-align:right;">0</div>
<div style="left:478px;top:224px;font-size:12px;line-height:16px;color:#000;width:34px;text-align:right;">0%</div>
<div style="left:379px;top:241px;font-size:12px;line-height:16px;color:#000;width:96px;text-align:right;">15.000</div>
<div style="left:478px;top:241px;font-size:12px;line-height:16px;color:#000;width:34px;text-align:right;">27%</div>
<div style="left:379px;top:258px;font-size:12px;line-height:16px;color:#000;width:96px;text-align:right;">2.850</div>
<div style="left:478px;top:258px;font-size:12px;line-height:16px;color:#000;width:34px;text-align:right;">5%</div>
<div style="left:379px;top:275px;font-size:12px;line-height:16px;color:#000;width:96px;text-align:right;">130</div>
<div style="left:478px;top:275px;font-size:12px;line-height:16px;color:#000;width:34px;text-align:right;">0%</div>
<div style="left:379px;top:292px;font-size:12px;line-height:16px;color:#000;width:93px;text-align:right;">54.740</div>
<div style="left:478px;top:292px;font-size:12px;line-height:16px;color:#000;width:34px;text-align:right;">100%</div>
<div style="left:379px;top:309px;font-size:12px;line-height:16px;color:#000;width:96px;text-align:right;">500</div>
<div style="left:478px;top:309px;font-size:12px;line-height:16px;color:#000;width:34px;text-align:right;">1%</div>
<div style="left:379px;top:326px;font-size:12px;line-height:16px;color:#000;width:96px;text-align:right;">6.000</div>
<div style="left:478px;top:326px;font-size:12px;line-height:16px;color:#000;width:34px;text-align:right;">11%</div>
<div style="left:379px;top:343px;font-size:12px;line-height:16px;color:#000;width:96px;text-align:right;">1.000</div>
<div style="left:478px;top:343px;font-size:12px;line-height:16px;color:#000;width:34px;text-align:right;">2%</div>
<div style="left:379px;top:360px;font-size:12px;line-height:16px;color:#000;width:96px;text-align:right;">400</div>
<div style="left:478px;top:360px;font-size:12px;line-height:16px;color:#000;width:34px;text-align:right;">1%</div>
<div style="left:379px;top:377px;font-size:12px;line-height:16px;color:#000;width:96px;text-align:right;">500</div>
<div style="left:478px;top:377px;font-size:12px;line-height:16px;color:#000;width:34px;text-align:right;">1%</div>
<div style="left:379px;top:394px;font-size:12px;line-height:16px;color:#000;width:96px;text-align:right;">50</div>
<div style="left:478px;top:394px;font-size:12px;line-height:16px;color:#000;width:34px;text-align:right;">0%</div>
<div style="left:379px;top:411px;font-size:12px;line-height:16px;color:#000;width:96px;text-align:right;">100</div>
<div style="left:478px;top:411px;font-size:12px;line-height:16px;color:#000;width:34px;text-align:right;">0%</div>
<div style="left:379px;top:428px;font-size:12px;line-height:16px;color:#000;width:96px;text-align:right;">200</div>
<div style="left:478px;top:428px;font-size:12px;line-height:16px;color:#000;width:34px;text-align:right;">0%</div>
<div style="left:379px;top:445px;font-size:12px;line-height:16px;color:#000;width:96px;text-align:right;">300</div>
<div style="left:478px;top:445px;font-size:12px;line-height:16px;color:#000;width:34px;text-align:right;">1%</div>
<div style="left:379px;top:462px;font-size:12px;line-height:16px;color:#000;width:96px;text-align:right;">400</div>
<div style="left:478px;top:462px;font-size:12px;line-height:16px;color:#000;width:34px;text-align:right;">1%</div>
<div style="left:379px;top:479px;font-size:12px;line-height:16px;color:#000;width:96px;text-align:right;">50</div>
<div style="left:478px;top:479px;font-size:12px;line-height:16px;color:#000;width:34px;text-align:right;">0%</div>
<div style="left:379px;top:496px;font-size:12px;line-height:16px;color:#000;width:96px;text-align:right;">300</div>
<div style="left:478px;top:496px;font-size:12px;line-height:16px;color:#000;width:34px;text-align:right;">1%</div>
<div style="left:379px;top:513px;font-size:12px;line-height:16px;color:#000;width:96px;text-align:right;">300</div>
<div style="left:478px;top:513px;font-size:12px;line-height:16px;color:#000;width:34px;text-align:right;">1%</div>
<div style="left:379px;top:530px;font-size:12px;line-height:16px;color:#000;width:96px;text-align:right;">0</div>
<div style="left:478px;top:530px;font-size:12px;line-height:16px;color:#000;width:34px;text-align:right;">0%</div>
<div style="left:379px;top:547px;font-size:12px;line-height:16px;color:#000;width:96px;text-align:right;">32</div>
<div style="left:478px;top:547px;font-size:12px;line-height:16px;color:#000;width:34px;text-align:right;">0%</div>
<div style="left:379px;top:564px;font-size:12px;line-height:16px;color:#000;width:96px;text-align:right;">0</div>
<div style="left:478px;top:564px;font-size:12px;line-height:16px;color:#000;width:34px;text-align:right;">0%</div>
<div style="left:379px;top:581px;font-size:12px;line-height:16px;color:#000;width:96px;text-align:right;">1.450</div>
<div style="left:478px;top:581px;font-size:12px;line-height:16px;color:#000;width:34px;text-align:right;">3%</div>
<div style="left:379px;top:598px;font-size:12px;line-height:16px;color:#000;width:96px;text-align:right;">250</div>
<div style="left:478px;top:598px;font-size:12px;line-height:16px;color:#000;width:34px;text-align:right;">0%</div>
<div style="left:379px;top:615px;font-size:12px;line-height:16px;color:#000;width:96px;text-align:right;">39</div>
<div style="left:478px;top:615px;font-size:12px;line-height:16px;color:#000;width:34px;text-align:right;">0%</div>
<div style="left:379px;top:632px;font-size:12px;line-height:16px;color:#000;width:96px;text-align:right;">3.877</div>
<div style="left:478px;top:632px;font-size:12px;line-height:16px;color:#000;width:34px;text-align:right;">7%</div>
<div style="left:379px;top:649px;font-size:12px;line-height:16px;color:#000;width:96px;text-align:right;">184</div>
<div style="left:478px;top:649px;font-size:12px;line-height:16px;color:#000;width:34px;text-align:right;">0%</div>
<div style="left:379px;top:666px;font-size:12px;line-height:16px;color:#000;width:96px;text-align:right;">14.881</div>
<div style="left:478px;top:666px;font-size:12px;line-height:16px;color:#000;width:34px;text-align:right;">27%</div>
<div style="left:379px;top:683px;font-size:12px;line-height:16px;color:#000;width:92px;text-align:right;">30.812 €</div>
<div style="left:478px;top:683px;font-size:12px;line-height:16px;color:#000;width:34px;text-align:right;">56%</div>
<div style="left:379px;top:700px;font-size:12px;line-height:16px;color:#000;width:92px;text-align:right;">23.928 €</div>
<div style="left:478px;top:700px;font-size:12px;line-height:16px;color:#000;width:34px;text-align:right;">44%</div>
<div style="left:536px;top:190px;font-size:12px;line-height:16px;color:#000;width:48px;text-align:right;">4.000</div>
<div style="left:587px;top:190px;font-size:12px;line-height:16px;color:#000;width:48px;text-align:right;">5.000</div>
<div style="left:638px;top:190px;font-size:12px;line-height:16px;color:#000;width:48px;text-align:right;">0</div>
<div style="left:689px;top:190px;font-size:12px;line-height:16px;color:#000;width:48px;text-align:right;">0</div>
<div style="left:740px;top:190px;font-size:12px;line-height:16px;color:#000;width:48px;text-align:right;">7.760</div>
<div style="left:791px;top:190px;font-size:12px;line-height:16px;color:#000;width:48px;text-align:right;">0</div>
<div style="left:842px;top:190px;font-size:12px;line-height:16px;color:#000;width:48px;text-align:right;">0</div>
<div style="left:893px;top:190px;font-size:12px;line-height:16px;color:#000;width:48px;text-align:right;">0</div>
<div style="left:944px;top:190px;font-size:12px;line-height:16px;color:#000;width:48px;text-align:right;">0</div>
<div style="left:995px;top:190px;font-size:12px;line-height:16px;color:#000;width:48px;text-align:right;">0</div>
<div style="left:1046px;top:190px;font-size:12px;line-height:16px;color:#000;width:48px;text-align:right;">0</div>
<div style="left:1097px;top:190px;font-size:12px;line-height:16px;color:#000;width:63px;text-align:right;">0</div>
<div style="left:536px;top:207px;font-size:12px;line-height:16px;color:#000;width:48px;text-align:right;">0</div>
<div style="left:587px;top:207px;font-size:12px;line-height:16px;color:#000;width:48px;text-align:right;">0</div>
<div style="left:638px;top:207px;font-size:12px;line-height:16px;color:#000;width:48px;text-align:right;">0</div>
<div style="left:689px;top:207px;font-size:12px;line-height:16px;color:#000;width:48px;text-align:right;">10.000</div>
<div style="left:740px;top:207px;font-size:12px;line-height:16px;color:#000;width:48px;text-align:right;">0</div>
<div style="left:791px;top:207px;font-size:12px;line-height:16px;color:#000;width:48px;text-align:right;">0</div>
<div style="left:842px;top:207px;font-size:12px;line-height:16px;color:#000;width:48px;text-align:right;">10.000</div>
<div style="left:893px;top:207px;font-size:12px;line-height:16px;color:#000;width:48px;text-align:right;">0</div>
<div style="left:944px;top:207px;font-size:12px;line-height:16px;color:#000;width:48px;text-align:right;">0</div>
<div style="left:995px;top:207px;font-size:12px;line-height:16px;color:#000;width:48px;text-align:right;">0</div>
<div style="left:1046px;top:207px;font-size:12px;line-height:16px;color:#000;width:48px;text-align:right;">0</div>
<div style="left:1097px;top:207px;font-size:12px;line-height:16px;color:#000;width:63px;text-align:right;">0</div>
<div style="left:536px;top:224px;font-size:12px;line-height:16px;color:#000;width:48px;text-align:right;">0</div>
<div style="left:587px;top:224px;font-size:12px;line-height:16px;color:#000;width:48px;text-align:right;">0</div>
<div style="left:638px;top:224px;font-size:12px;line-height:16px;color:#000;width:48px;text-align:right;">0</div>
<div style="left:689px;top:224px;font-size:12px;line-height:16px;color:#000;width:48px;text-align:right;">0</div>
<div style="left:740px;top:224px;font-size:12px;line-height:16px;color:#000;width:48px;text-align:right;">0</div>
<div style="left:791px;top:224px;font-size:12px;line-height:16px;color:#000;width:48px;text-align:right;">0</div>
<div style="left:842px;top:224px;font-size:12px;line-height:16px;color:#000;width:48px;text-align:right;">0</div>
<div style="left:893px;top:224px;font-size:12px;line-height:16px;color:#000;width:48px;text-align:right;">0</div>
<div style="left:944px;top:224px;font-size:12px;line-height:16px;color:#000;width:48px;text-align:right;">0</div>
<div style="left:995px;top:224px;font-size:12px;line-height:16px;color:#000;width:48px;text-align:right;">0</div>
<div style="left:1046px;top:224px;font-size:12px;line-height:16px;color:#000;width:48px;text-align:right;">0</div>
<div style="left:1097px;top:224px;font-size:12px;line-height:16px;color:#000;width:63px;text-align:right;">0</div>
<div style="left:536px;top:241px;font-size:12px;line-height:16px;color:#000;width:48px;text-align:right;">0</div>
<div style="left:587px;top:241px;font-size:12px;line-height:16px;color:#000;width:48px;text-align:right;">0</div>
<div style="left:638px;top:241px;font-size:12px;line-height:16px;color:#000;width:48px;text-align:right;">0</div>
<div style="left:689px;top:241px;font-size:12px;line-height:16px;color:#000;width:48px;text-align:right;">0</div>
<div style="left:740px;top:241px;font-size:12px;line-height:16px;color:#000;width:48px;text-align:right;">0</div>
<div style="left:791px;top:241px;font-size:12px;line-height:16px;color:#000;width:48px;text-align:right;">0</div>
<div style="left:842px;top:241px;font-size:12px;line-height:16px;color:#000;width:48px;text-align:right;">0</div>
<div style="left:893px;top:241px;font-size:12px;line-height:16px;color:#000;width:48px;text-align:right;">0</div>
<div style="left:944px;top:241px;font-size:12px;line-height:16px;color:#000;width:48px;text-align:right;">15.000</div>
<div style="left:995px;top:241px;font-size:12px;line-height:16px;color:#000;width:48px;text-align:right;">0</div>
<div style="left:1046px;top:241px;font-size:12px;line-height:16px;color:#000;width:48px;text-align:right;">0</div>
<div style="left:1097px;top:241px;font-size:12px;line-height:16px;color:#000;width:63px;text-align:right;">0</div>
<div style="left:1097px;top:258px;font-size:12px;line-height:16px;color:#000;width:63px;text-align:right;">2.850</div>
<div style="left:536px;top:275px;font-size:12px;line-height:16px;color:#000;width:48px;text-align:right;">0</div>
<div style="left:587px;top:275px;font-size:12px;line-height:16px;color:#000;width:48px;text-align:right;">0</div>
<div style="left:638px;top:275px;font-size:12px;line-height:16px;color:#000;width:48px;text-align:right;">0</div>
<div style="left:689px;top:275px;font-size:12px;line-height:16px;color:#000;width:48px;text-align:right;">0</div>
<div style="left:740px;top:275px;font-size:12px;line-height:16px;color:#000;width:48px;text-align:right;">0</div>
<div style="left:791px;top:275px;font-size:12px;line-height:16px;color:#000;width:48px;text-align:right;">0</div>
<div style="left:842px;top:275px;font-size:12px;line-height:16px;color:#000;width:48px;text-align:right;">0</div>
<div style="left:893px;top:275px;font-size:12px;line-height:16px;color:#000;width:48px;text-align:right;">0</div>
<div style="left:944px;top:275px;font-size:12px;line-height:16px;color:#000;width:48px;text-align:right;">0</div>
<div style="left:995px;top:275px;font-size:12px;line-height:16px;color:#000;width:48px;text-align:right;">0</div>
<div style="left:1046px;top:275px;font-size:12px;line-height:16px;color:#000;width:48px;text-align:right;">100</div>
<div style="left:1097px;top:275px;font-size:12px;line-height:16px;color:#000;width:63px;text-align:right;">30</div>
<div style="left:536px;top:292px;font-size:12px;line-height:16px;color:#000;width:45px;text-align:right;">4.000</div>
<div style="left:587px;top:292px;font-size:12px;line-height:16px;color:#000;width:45px;text-align:right;">5.000</div>
<div style="left:638px;top:292px;font-size:12px;line-height:16px;color:#000;width:45px;text-align:right;">0</div>
<div style="left:689px;top:292px;font-size:12px;line-height:16px;color:#000;width:45px;text-align:right;">10.000</div>
<div style="left:740px;top:292px;font-size:12px;line-height:16px;color:#000;width:45px;text-align:right;">7.760</div>
<div style="left:791px;top:292px;font-size:12px;line-height:16px;color:#000;width:45px;text-align:right;">0</div>
<div style="left:842px;top:292px;font-size:12px;line-height:16px;color:#000;width:45px;text-align:right;">10.000</div>
<div style="left:893px;top:292px;font-size:12px;line-height:16px;color:#000;width:45px;text-align:right;">0</div>
<div style="left:944px;top:292px;font-size:12px;line-height:16px;color:#000;width:45px;text-align:right;">15.000</div>
<div style="left:995px;top:292px;font-size:12px;line-height:16px;color:#000;width:45px;text-align:right;">0</div>
<div style="left:1046px;top:292px;font-size:12px;line-height:16px;color:#000;width:45px;text-align:right;">100</div>
<div style="left:1097px;top:292px;font-size:12px;line-height:16px;color:#000;width:60px;text-align:right;">2.880</div>
<div style="left:536px;top:309px;font-size:12px;line-height:16px;color:#000;width:48px;text-align:right;">0</div>
<div style="left:587px;top:309px;font-size:12px;line-height:16px;color:#000;width:48px;text-align:right;">0</div>
<div style="left:638px;top:309px;font-size:12px;line-height:16px;color:#000;width:48px;text-align:right;">0</div>
<div style="left:689px;top:309px;font-size:12px;line-height:16px;color:#000;width:48px;text-align:right;">0</div>
<div style="left:740px;top:309px;font-size:12px;line-height:16px;color:#000;width:48px;text-align:right;">0</div>
<div style="left:791px;top:309px;font-size:12px;line-height:16px;color:#000;width:48px;text-align:right;">0</div>
<div style="left:842px;top:309px;font-size:12px;line-height:16px;color:#000;width:48px;text-align:right;">0</div>
<div style="left:893px;top:309px;font-size:12px;line-height:16px;color:#000;width:48px;text-align:right;">0</div>
<div style="left:944px;top:309px;font-size:12px;line-height:16px;color:#000;width:48px;text-align:right;">0</div>
<div style="left:995px;top:309px;font-size:12px;line-height:16px;color:#000;width:48px;text-align:right;">0</div>
<div style="left:1046px;top:309px;font-size:12px;line-height:16px;color:#000;width:48px;text-align:right;">500</div>
<div style="left:1097px;top:309px;font-size:12px;line-height:16px;color:#000;width:63px;text-align:right;">0</div>
<div style="left:536px;top:326px;font-size:12px;line-height:16px;color:#000;width:48px;text-align:right;">0</div>
<div style="left:587px;top:326px;font-size:12px;line-height:16px;color:#000;width:48px;text-align:right;">6.000</div>
<div style="left:638px;top:326px;font-size:12px;line-height:16px;color:#000;width:48px;text-align:right;">0</div>
<div style="left:689px;top:326px;font-size:12px;line-height:16px;color:#000;width:48px;text-align:right;">0</div>
<div style="left:740px;top:326px;font-size:12px;line-height:16px;color:#000;width:48px;text-align:right;">0</div>
<div style="left:791px;top:326px;font-size:12px;line-height:16px;color:#000;width:48px;text-align:right;">0</div>
<div style="left:842px;top:326px;font-size:12px;line-height:16px;color:#000;width:48px;text-align:right;">0</div>
<div style="left:893px;top:326px;font-size:12px;line-height:16px;color:#000;width:48px;text-align:right;">0</div>
<div style="left:944px;top:326px;font-size:12px;line-height:16px;color:#000;width:48px;text-align:right;">0</div>
<div style="left:995px;top:326px;font-size:12px;line-height:16px;color:#000;width:48px;text-align:right;">0</div>
<div style="left:1046px;top:326px;font-size:12px;line-height:16px;color:#000;width:48px;text-align:right;">0</div>
<div style="left:1097px;top:326px;font-size:12px;line-height:16px;color:#000;width:63px;text-align:right;">0</div>
<div style="left:536px;top:343px;font-size:12px;line-height:16px;color:#000;width:48px;text-align:right;">0</div>
<div style="left:587px;top:343px;font-size:12px;line-height:16px;color:#000;width:48px;text-align:right;">0</div>
<div style="left:638px;top:343px;font-size:12px;line-height:16px;color:#000;width:48px;text-align:right;">0</div>
<div style="left:689px;top:343px;font-size:12px;line-height:16px;color:#000;width:48px;text-align:right;">0</div>
<div style="left:740px;top:343px;font-size:12px;line-height:16px;color:#000;width:48px;text-align:right;">0</div>
<div style="left:791px;top:343px;font-size:12px;line-height:16px;color:#000;width:48px;text-align:right;">0</div>
<div style="left:842px;top:343px;font-size:12px;line-height:16px;color:#000;width:48px;text-align:right;">0</div>
<div style="left:893px;top:343px;font-size:12px;line-height:16px;color:#000;width:48px;text-align:right;">0</div>
<div style="left:944px;top:343px;font-size:12px;line-height:16px;color:#000;width:48px;text-align:right;">0</div>
<div style="left:995px;top:343px;font-size:12px;line-height:16px;color:#000;width:48px;text-align:right;">0</div>
<div style="left:1046px;top:343px;font-size:12px;line-height:16px;color:#000;width:48px;text-align:right;">0</div>
<div style="left:1097px;top:343px;font-size:12px;line-height:16px;color:#000;width:63px;text-align:right;">1.000</div>
<div style="left:536px;top:360px;font-size:12px;line-height:16px;color:#000;width:48px;text-align:right;">0</div>
<div style="left:587px;top:360px;font-size:12px;line-height:16px;color:#000;width:48px;text-align:right;">0</div>
<div style="left:638px;top:360px;font-size:12px;line-height:16px;color:#000;width:48px;text-align:right;">0</div>
<div style="left:689px;top:360px;font-size:12px;line-height:16px;color:#000;width:48px;text-align:right;">0</div>
<div style="left:740px;top:360px;font-size:12px;line-height:16px;color:#000;width:48px;text-align:right;">0</div>
<div style="left:791px;top:360px;font-size:12px;line-height:16px;color:#000;width:48px;text-align:right;">0</div>
<div style="left:842px;top:360px;font-size:12px;line-height:16px;color:#000;width:48px;text-align:right;">0</div>
<div style="left:893px;top:360px;font-size:12px;line-height:16px;color:#000;width:48px;text-align:right;">400</div>
<div style="left:944px;top:360px;font-size:12px;line-height:16px;color:#000;width:48px;text-align:right;">0</div>
<div style="left:995px;top:360px;font-size:12px;line-height:16px;color:#000;width:48px;text-align:right;">0</div>
<div style="left:1046px;top:360px;font-size:12px;line-height:16px;color:#000;width:48px;text-align:right;">0</div>
<div style="left:1097px;top:360px;font-size:12px;line-height:16px;color:#000;width:63px;text-align:right;">0</div>
<div style="left:536px;top:377px;font-size:12px;line-height:16px;color:#000;width:48px;text-align:right;">0</div>
<div style="left:587px;top:377px;font-size:12px;line-height:16px;color:#000;width:48px;text-align:right;">0</div>
<div style="left:638px;top:377px;font-size:12px;line-height:16px;color:#000;width:48px;text-align:right;">0</div>
<div style="left:689px;top:377px;font-size:12px;line-height:16px;color:#000;width:48px;text-align:right;">0</div>
<div style="left:740px;top:377px;font-size:12px;line-height:16px;color:#000;width:48px;text-align:right;">0</div>
<div style="left:791px;top:377px;font-size:12px;line-height:16px;color:#000;width:48px;text-align:right;">0</div>
<div style="left:842px;top:377px;font-size:12px;line-height:16px;color:#000;width:48px;text-align:right;">0</div>
<div style="left:893px;top:377px;font-size:12px;line-height:16px;color:#000;width:48px;text-align:right;">0</div>
<div style="left:944px;top:377px;font-size:12px;line-height:16px;color:#000;width:48px;text-align:right;">0</div>
<div style="left:995px;top:377px;font-size:12px;line-height:16px;color:#000;width:48px;text-align:right;">0</div>
<div style="left:1046px;top:377px;font-size:12px;line-height:16px;color:#000;width:48px;text-align:right;">0</div>
<div style="left:1097px;top:377px;font-size:12px;line-height:16px;color:#000;width:63px;text-align:right;">500</div>
<div style="left:536px;top:394px;font-size:12px;line-height:16px;color:#000;width:48px;text-align:right;">0</div>
<div style="left:587px;top:394px;font-size:12px;line-height:16px;color:#000;width:48px;text-align:right;">0</div>
<div style="left:638px;top:394px;font-size:12px;line-height:16px;color:#000;width:48px;text-align:right;">0</div>
<div style="left:689px;top:394px;font-size:12px;line-height:16px;color:#000;width:48px;text-align:right;">50</div>
<div style="left:740px;top:394px;font-size:12px;line-height:16px;color:#000;width:48px;text-align:right;">0</div>
<div style="left:791px;top:394px;font-size:12px;line-height:16px;color:#000;width:48px;text-align:right;">0</div>
<div style="left:842px;top:394px;font-size:12px;line-height:16px;color:#000;width:48px;text-align:right;">0</div>
<div style="left:893px;top:394px;font-size:12px;line-height:16px;color:#000;width:48px;text-align:right;">0</div>
<div style="left:944px;top:394px;font-size:12px;line-height:16px;color:#000;width:48px;text-align:right;">0</div>
<div style="left:995px;top:394px;font-size:12px;line-height:16px;color:#000;width:48px;text-align:right;">0</div>
<div style="left:1046px;top:394px;font-size:12px;line-height:16px;color:#000;width:48px;text-align:right;">0</div>
<div style="left:1097px;top:394px;font-size:12px;line-height:16px;color:#000;width:63px;text-align:right;">0</div>
<div style="left:536px;top:411px;font-size:12px;line-height:16px;color:#000;width:48px;text-align:right;">0</div>
<div style="left:587px;top:411px;font-size:12px;line-height:16px;color:#000;width:48px;text-align:right;">0</div>
<div style="left:638px;top:411px;font-size:12px;line-height:16px;color:#000;width:48px;text-align:right;">0</div>
<div style="left:689px;top:411px;font-size:12px;line-height:16px;color:#000;width:48px;text-align:right;">100</div>
<div style="left:740px;top:411px;font-size:12px;line-height:16px;color:#000;width:48px;text-align:right;">0</div>
<div style="left:791px;top:411px;font-size:12px;line-height:16px;color:#000;width:48px;text-align:right;">0</div>
<div style="left:842px;top:411px;font-size:12px;line-height:16px;color:#000;width:48px;text-align:right;">0</div>
<div style="left:893px;top:411px;font-size:12px;line-height:16px;color:#000;width:48px;text-align:right;">0</div>
<div style="left:944px;top:411px;font-size:12px;line-height:16px;color:#000;width:48px;text-align:right;">0</div>
<div style="left:995px;top:411px;font-size:12px;line-height:16px;color:#000;width:48px;text-align:right;">0</div>
<div style="left:1046px;top:411px;font-size:12px;line-height:16px;color:#000;width:48px;text-align:right;">0</div>
<div style="left:1097px;top:411px;font-size:12px;line-height:16px;color:#000;width:63px;text-align:right;">0</div>
<div style="left:536px;top:428px;font-size:12px;line-height:16px;color:#000;width:48px;text-align:right;">0</div>
<div style="left:587px;top:428px;font-size:12px;line-height:16px;color:#000;width:48px;text-align:right;">0</div>
<div style="left:638px;top:428px;font-size:12px;line-height:16px;color:#000;width:48px;text-align:right;">200</div>
<div style="left:689px;top:428px;font-size:12px;line-height:16px;color:#000;width:48px;text-align:right;">0</div>
<div style="left:740px;top:428px;font-size:12px;line-height:16px;color:#000;width:48px;text-align:right;">0</div>
<div style="left:791px;top:428px;font-size:12px;line-height:16px;color:#000;width:48px;text-align:right;">0</div>
<div style="left:842px;top:428px;font-size:12px;line-height:16px;color:#000;width:48px;text-align:right;">0</div>
<div style="left:893px;top:428px;font-size:12px;line-height:16px;color:#000;width:48px;text-align:right;">0</div>
<div style="left:944px;top:428px;font-size:12px;line-height:16px;color:#000;width:48px;text-align:right;">0</div>
<div style="left:995px;top:428px;font-size:12px;line-height:16px;color:#000;width:48px;text-align:right;">0</div>
<div style="left:1046px;top:428px;font-size:12px;line-height:16px;color:#000;width:48px;text-align:right;">0</div>
<div style="left:1097px;top:428px;font-size:12px;line-height:16px;color:#000;width:63px;text-align:right;">0</div>
<div style="left:536px;top:445px;font-size:12px;line-height:16px;color:#000;width:48px;text-align:right;">0</div>
<div style="left:587px;top:445px;font-size:12px;line-height:16px;color:#000;width:48px;text-align:right;">0</div>
<div style="left:638px;top:445px;font-size:12px;line-height:16px;color:#000;width:48px;text-align:right;">0</div>
<div style="left:689px;top:445px;font-size:12px;line-height:16px;color:#000;width:48px;text-align:right;">0</div>
<div style="left:740px;top:445px;font-size:12px;line-height:16px;color:#000;width:48px;text-align:right;">0</div>
<div style="left:791px;top:445px;font-size:12px;line-height:16px;color:#000;width:48px;text-align:right;">0</div>
<div style="left:842px;top:445px;font-size:12px;line-height:16px;color:#000;width:48px;text-align:right;">0</div>
<div style="left:893px;top:445px;font-size:12px;line-height:16px;color:#000;width:48px;text-align:right;">0</div>
<div style="left:944px;top:445px;font-size:12px;line-height:16px;color:#000;width:48px;text-align:right;">0</div>
<div style="left:995px;top:445px;font-size:12px;line-height:16px;color:#000;width:48px;text-align:right;">300</div>
<div style="left:1046px;top:445px;font-size:12px;line-height:16px;color:#000;width:48px;text-align:right;">0</div>
<div style="left:1097px;top:445px;font-size:12px;line-height:16px;color:#000;width:63px;text-align:right;">0</div>
<div style="left:536px;top:462px;font-size:12px;line-height:16px;color:#000;width:48px;text-align:right;">0</div>
<div style="left:587px;top:462px;font-size:12px;line-height:16px;color:#000;width:48px;text-align:right;">0</div>
<div style="left:638px;top:462px;font-size:12px;line-height:16px;color:#000;width:48px;text-align:right;">0</div>
<div style="left:689px;top:462px;font-size:12px;line-height:16px;color:#000;width:48px;text-align:right;">0</div>
<div style="left:740px;top:462px;font-size:12px;line-height:16px;color:#000;width:48px;text-align:right;">0</div>
<div style="left:791px;top:462px;font-size:12px;line-height:16px;color:#000;width:48px;text-align:right;">0</div>
<div style="left:842px;top:462px;font-size:12px;line-height:16px;color:#000;width:48px;text-align:right;">0</div>
<div style="left:893px;top:462px;font-size:12px;line-height:16px;color:#000;width:48px;text-align:right;">0</div>
<div style="left:944px;top:462px;font-size:12px;line-height:16px;color:#000;width:48px;text-align:right;">0</div>
<div style="left:995px;top:462px;font-size:12px;line-height:16px;color:#000;width:48px;text-align:right;">0</div>
<div style="left:1046px;top:462px;font-size:12px;line-height:16px;color:#000;width:48px;text-align:right;">0</div>
<div style="left:1097px;top:462px;font-size:12px;line-height:16px;color:#000;width:63px;text-align:right;">400</div>
<div style="left:536px;top:479px;font-size:12px;line-height:16px;color:#000;width:48px;text-align:right;">0</div>
<div style="left:587px;top:479px;font-size:12px;line-height:16px;color:#000;width:48px;text-align:right;">0</div>
<div style="left:638px;top:479px;font-size:12px;line-height:16px;color:#000;width:48px;text-align:right;">0</div>
<div style="left:689px;top:479px;font-size:12px;line-height:16px;color:#000;width:48px;text-align:right;">0</div>
<div style="left:740px;top:479px;font-size:12px;line-height:16px;color:#000;width:48px;text-align:right;">0</div>
<div style="left:791px;top:479px;font-size:12px;line-height:16px;color:#000;width:48px;text-align:right;">0</div>
<div style="left:842px;top:479px;font-size:12px;line-height:16px;color:#000;width:48px;text-align:right;">0</div>
<div style="left:893px;top:479px;font-size:12px;line-height:16px;color:#000;width:48px;text-align:right;">0</div>
<div style="left:944px;top:479px;font-size:12px;line-height:16px;color:#000;width:48px;text-align:right;">0</div>
<div style="left:995px;top:479px;font-size:12px;line-height:16px;color:#000;width:48px;text-align:right;">0</div>
<div style="left:1046px;top:479px;font-size:12px;line-height:16px;color:#000;width:48px;text-align:right;">0</div>
<div style="left:1097px;top:479px;font-size:12px;line-height:16px;color:#000;width:63px;text-align:right;">50</div>
<div style="left:536px;top:496px;font-size:12px;line-height:16px;color:#000;width:48px;text-align:right;">0</div>
<div style="left:587px;top:496px;font-size:12px;line-height:16px;color:#000;width:48px;text-align:right;">0</div>
<div style="left:638px;top:496px;font-size:12px;line-height:16px;color:#000;width:48px;text-align:right;">0</div>
<div style="left:689px;top:496px;font-size:12px;line-height:16px;color:#000;width:48px;text-align:right;">0</div>
<div style="left:740px;top:496px;font-size:12px;line-height:16px;color:#000;width:48px;text-align:right;">0</div>
<div style="left:791px;top:496px;font-size:12px;line-height:16px;color:#000;width:48px;text-align:right;">0</div>
<div style="left:842px;top:496px;font-size:12px;line-height:16px;color:#000;width:48px;text-align:right;">0</div>
<div style="left:893px;top:496px;font-size:12px;line-height:16px;color:#000;width:48px;text-align:right;">0</div>
<div style="left:944px;top:496px;font-size:12px;line-height:16px;color:#000;width:48px;text-align:right;">0</div>
<div style="left:995px;top:496px;font-size:12px;line-height:16px;color:#000;width:48px;text-align:right;">0</div>
<div style="left:1046px;top:496px;font-size:12px;line-height:16px;color:#000;width:48px;text-align:right;">0</div>
<div style="left:1097px;top:496px;font-size:12px;line-height:16px;color:#000;width:63px;text-align:right;">300</div>
<div style="left:536px;top:513px;font-size:12px;line-height:16px;color:#000;width:48px;text-align:right;">0</div>
<div style="left:587px;top:513px;font-size:12px;line-height:16px;color:#000;width:48px;text-align:right;">0</div>
<div style="left:638px;top:513px;font-size:12px;line-height:16px;color:#000;width:48px;text-align:right;">0</div>
<div style="left:689px;top:513px;font-size:12px;line-height:16px;color:#000;width:48px;text-align:right;">0</div>
<div style="left:740px;top:513px;font-size:12px;line-height:16px;color:#000;width:48px;text-align:right;">0</div>
<div style="left:791px;top:513px;font-size:12px;line-height:16px;color:#000;width:48px;text-align:right;">0</div>
<div style="left:842px;top:513px;font-size:12px;line-height:16px;color:#000;width:48px;text-align:right;">0</div>
<div style="left:893px;top:513px;font-size:12px;line-height:16px;color:#000;width:48px;text-align:right;">0</div>
<div style="left:944px;top:513px;font-size:12px;line-height:16px;color:#000;width:48px;text-align:right;">0</div>
<div style="left:995px;top:513px;font-size:12px;line-height:16px;color:#000;width:48px;text-align:right;">0</div>
<div style="left:1046px;top:513px;font-size:12px;line-height:16px;color:#000;width:48px;text-align:right;">0</div>
<div style="left:1097px;top:513px;font-size:12px;line-height:16px;color:#000;width:63px;text-align:right;">300</div>
<div style="left:536px;top:530px;font-size:12px;line-height:16px;color:#000;width:48px;text-align:right;">0</div>
<div style="left:587px;top:530px;font-size:12px;line-height:16px;color:#000;width:48px;text-align:right;">0</div>
<div style="left:638px;top:530px;font-size:12px;line-height:16px;color:#000;width:48px;text-align:right;">0</div>
<div style="left:689px;top:530px;font-size:12px;line-height:16px;color:#000;width:48px;text-align:right;">0</div>
<div style="left:740px;top:530px;font-size:12px;line-height:16px;color:#000;width:48px;text-align:right;">0</div>
<div style="left:791px;top:530px;font-size:12px;line-height:16px;color:#000;width:48px;text-align:right;">0</div>
<div style="left:842px;top:530px;font-size:12px;line-height:16px;color:#000;width:48px;text-align:right;">0</div>
<div style="left:893px;top:530px;font-size:12px;line-height:16px;color:#000;width:48px;text-align:right;">0</div>
<div style="left:944px;top:530px;font-size:12px;line-height:16px;color:#000;width:48px;text-align:right;">0</div>
<div style="left:995px;top:530px;font-size:12px;line-height:16px;color:#000;width:48px;text-align:right;">0</div>
<div style="left:1046px;top:530px;font-size:12px;line-height:16px;color:#000;width:48px;text-align:right;">0</div>
<div style="left:1097px;top:530px;font-size:12px;line-height:16px;color:#000;width:63px;text-align:right;">0</div>
<div style="left:536px;top:547px;font-size:12px;line-height:16px;color:#000;width:48px;text-align:right;">0</div>
<div style="left:587px;top:547px;font-size:12px;line-height:16px;color:#000;width:48px;text-align:right;">0</div>
<div style="left:638px;top:547px;font-size:12px;line-height:16px;color:#000;width:48px;text-align:right;">0</div>
<div style="left:689px;top:547px;font-size:12px;line-height:16px;color:#000;width:48px;text-align:right;">0</div>
<div style="left:740px;top:547px;font-size:12px;line-height:16px;color:#000;width:48px;text-align:right;">0</div>
<div style="left:791px;top:547px;font-size:12px;line-height:16px;color:#000;width:48px;text-align:right;">0</div>
<div style="left:842px;top:547px;font-size:12px;line-height:16px;color:#000;width:48px;text-align:right;">30</div>
<div style="left:893px;top:547px;font-size:12px;line-height:16px;color:#000;width:48px;text-align:right;">0</div>
<div style="left:944px;top:547px;font-size:12px;line-height:16px;color:#000;width:48px;text-align:right;">0</div>
<div style="left:995px;top:547px;font-size:12px;line-height:16px;color:#000;width:48px;text-align:right;">0</div>
<div style="left:1046px;top:547px;font-size:12px;line-height:16px;color:#000;width:48px;text-align:right;">0</div>
<div style="left:1097px;top:547px;font-size:12px;line-height:16px;color:#000;width:63px;text-align:right;">2</div>
<div style="left:536px;top:564px;font-size:12px;line-height:16px;color:#000;width:48px;text-align:right;">0</div>
<div style="left:587px;top:564px;font-size:12px;line-height:16px;color:#000;width:48px;text-align:right;">0</div>
<div style="left:638px;top:564px;font-size:12px;line-height:16px;color:#000;width:48px;text-align:right;">0</div>
<div style="left:689px;top:564px;font-size:12px;line-height:16px;color:#000;width:48px;text-align:right;">0</div>
<div style="left:740px;top:564px;font-size:12px;line-height:16px;color:#000;width:48px;text-align:right;">0</div>
<div style="left:791px;top:564px;font-size:12px;line-height:16px;color:#000;width:48px;text-align:right;">0</div>
<div style="left:842px;top:564px;font-size:12px;line-height:16px;color:#000;width:48px;text-align:right;">0</div>
<div style="left:893px;top:564px;font-size:12px;line-height:16px;color:#000;width:48px;text-align:right;">0</div>
<div style="left:944px;top:564px;font-size:12px;line-height:16px;color:#000;width:48px;text-align:right;">0</div>
<div style="left:995px;top:564px;font-size:12px;line-height:16px;color:#000;width:48px;text-align:right;">0</div>
<div style="left:1046px;top:564px;font-size:12px;line-height:16px;color:#000;width:48px;text-align:right;">0</div>
<div style="left:1097px;top:564px;font-size:12px;line-height:16px;color:#000;width:63px;text-align:right;">0</div>
<div style="left:536px;top:581px;font-size:12px;line-height:16px;color:#000;width:48px;text-align:right;">1.450</div>
<div style="left:587px;top:581px;font-size:12px;line-height:16px;color:#000;width:48px;text-align:right;">0</div>
<div style="left:638px;top:581px;font-size:12px;line-height:16px;color:#000;width:48px;text-align:right;">0</div>
<div style="left:689px;top:581px;font-size:12px;line-height:16px;color:#000;width:48px;text-align:right;">0</div>
<div style="left:740px;top:581px;font-size:12px;line-height:16px;color:#000;width:48px;text-align:right;">0</div>
<div style="left:791px;top:581px;font-size:12px;line-height:16px;color:#000;width:48px;text-align:right;">0</div>
<div style="left:842px;top:581px;font-size:12px;line-height:16px;color:#000;width:48px;text-align:right;">0</div>
<div style="left:893px;top:581px;font-size:12px;line-height:16px;color:#000;width:48px;text-align:right;">0</div>
<div style="left:944px;top:581px;font-size:12px;line-height:16px;color:#000;width:48px;text-align:right;">0</div>
<div style="left:995px;top:581px;font-size:12px;line-height:16px;color:#000;width:48px;text-align:right;">0</div>
<div style="left:1046px;top:581px;font-size:12px;line-height:16px;color:#000;width:48px;text-align:right;">0</div>
<div style="left:1097px;top:581px;font-size:12px;line-height:16px;color:#000;width:63px;text-align:right;">0</div>
<div style="left:536px;top:598px;font-size:12px;line-height:16px;color:#000;width:48px;text-align:right;">0</div>
<div style="left:587px;top:598px;font-size:12px;line-height:16px;color:#000;width:48px;text-align:right;">0</div>
<div style="left:638px;top:598px;font-size:12px;line-height:16px;color:#000;width:48px;text-align:right;">0</div>
<div style="left:689px;top:598px;font-size:12px;line-height:16px;color:#000;width:48px;text-align:right;">0</div>
<div style="left:740px;top:598px;font-size:12px;line-height:16px;color:#000;width:48px;text-align:right;">0</div>
<div style="left:791px;top:598px;font-size:12px;line-height:16px;color:#000;width:48px;text-align:right;">0</div>
<div style="left:842px;top:598px;font-size:12px;line-height:16px;color:#000;width:48px;text-align:right;">0</div>
<div style="left:893px;top:598px;font-size:12px;line-height:16px;color:#000;width:48px;text-align:right;">0</div>
<div style="left:944px;top:598px;font-size:12px;line-height:16px;color:#000;width:48px;text-align:right;">0</div>
<div style="left:995px;top:598px;font-size:12px;line-height:16px;color:#000;width:48px;text-align:right;">250</div>
<div style="left:1046px;top:598px;font-size:12px;line-height:16px;color:#000;width:48px;text-align:right;">0</div>
<div style="left:1097px;top:598px;font-size:12px;line-height:16px;color:#000;width:63px;text-align:right;">0</div>
<div style="left:536px;top:615px;font-size:12px;line-height:16px;color:#000;width:48px;text-align:right;">0</div>
<div style="left:587px;top:615px;font-size:12px;line-height:16px;color:#000;width:48px;text-align:right;">0</div>
<div style="left:638px;top:615px;font-size:12px;line-height:16px;color:#000;width:48px;text-align:right;">0</div>
<div style="left:689px;top:615px;font-size:12px;line-height:16px;color:#000;width:48px;text-align:right;">0</div>
<div style="left:740px;top:615px;font-size:12px;line-height:16px;color:#000;width:48px;text-align:right;">0</div>
<div style="left:791px;top:615px;font-size:12px;line-height:16px;color:#000;width:48px;text-align:right;">0</div>
<div style="left:842px;top:615px;font-size:12px;line-height:16px;color:#000;width:48px;text-align:right;">0</div>
<div style="left:893px;top:615px;font-size:12px;line-height:16px;color:#000;width:48px;text-align:right;">0</div>
<div style="left:944px;top:615px;font-size:12px;line-height:16px;color:#000;width:48px;text-align:right;">0</div>
<div style="left:995px;top:615px;font-size:12px;line-height:16px;color:#000;width:48px;text-align:right;">39</div>
<div style="left:1046px;top:615px;font-size:12px;line-height:16px;color:#000;width:48px;text-align:right;">0</div>
<div style="left:1097px;top:615px;font-size:12px;line-height:16px;color:#000;width:63px;text-align:right;">0</div>
<div style="left:536px;top:632px;font-size:12px;line-height:16px;color:#000;width:48px;text-align:right;">292</div>
<div style="left:587px;top:632px;font-size:12px;line-height:16px;color:#000;width:48px;text-align:right;">292</div>
<div style="left:638px;top:632px;font-size:12px;line-height:16px;color:#000;width:48px;text-align:right;">292</div>
<div style="left:689px;top:632px;font-size:12px;line-height:16px;color:#000;width:48px;text-align:right;">292</div>
<div style="left:740px;top:632px;font-size:12px;line-height:16px;color:#000;width:48px;text-align:right;">292</div>
<div style="left:791px;top:632px;font-size:12px;line-height:16px;color:#000;width:48px;text-align:right;">292</div>
<div style="left:842px;top:632px;font-size:12px;line-height:16px;color:#000;width:48px;text-align:right;">292</div>
<div style="left:893px;top:632px;font-size:12px;line-height:16px;color:#000;width:48px;text-align:right;">314</div>
<div style="left:944px;top:632px;font-size:12px;line-height:16px;color:#000;width:48px;text-align:right;">314</div>
<div style="left:995px;top:632px;font-size:12px;line-height:16px;color:#000;width:48px;text-align:right;">22</div>
<div style="left:1046px;top:632px;font-size:12px;line-height:16px;color:#000;width:48px;text-align:right;">372</div>
<div style="left:1097px;top:632px;font-size:12px;line-height:16px;color:#000;width:63px;text-align:right;">812</div>
<div style="left:536px;top:649px;font-size:12px;line-height:16px;color:#000;width:48px;text-align:right;">12</div>
<div style="left:587px;top:649px;font-size:12px;line-height:16px;color:#000;width:48px;text-align:right;">0</div>
<div style="left:638px;top:649px;font-size:12px;line-height:16px;color:#000;width:48px;text-align:right;">24</div>
<div style="left:689px;top:649px;font-size:12px;line-height:16px;color:#000;width:48px;text-align:right;">0</div>
<div style="left:740px;top:649px;font-size:12px;line-height:16px;color:#000;width:48px;text-align:right;">0</div>
<div style="left:791px;top:649px;font-size:12px;line-height:16px;color:#000;width:48px;text-align:right;">0</div>
<div style="left:842px;top:649px;font-size:12px;line-height:16px;color:#000;width:48px;text-align:right;">0</div>
<div style="left:893px;top:649px;font-size:12px;line-height:16px;color:#000;width:48px;text-align:right;">0</div>
<div style="left:944px;top:649px;font-size:12px;line-height:16px;color:#000;width:48px;text-align:right;">0</div>
<div style="left:995px;top:649px;font-size:12px;line-height:16px;color:#000;width:48px;text-align:right;">100</div>
<div style="left:1046px;top:649px;font-size:12px;line-height:16px;color:#000;width:48px;text-align:right;">48</div>
<div style="left:1097px;top:649px;font-size:12px;line-height:16px;color:#000;width:63px;text-align:right;">0</div>
<div style="left:536px;top:666px;font-size:12px;line-height:16px;color:#000;width:48px;text-align:right;">0</div>
<div style="left:587px;top:666px;font-size:12px;line-height:16px;color:#000;width:48px;text-align:right;">0</div>
<div style="left:638px;top:666px;font-size:12px;line-height:16px;color:#000;width:48px;text-align:right;">0</div>
<div style="left:689px;top:666px;font-size:12px;line-height:16px;color:#000;width:48px;text-align:right;">0</div>
<div style="left:740px;top:666px;font-size:12px;line-height:16px;color:#000;width:48px;text-align:right;">0</div>
<div style="left:791px;top:666px;font-size:12px;line-height:16px;color:#000;width:48px;text-align:right;">0</div>
<div style="left:842px;top:666px;font-size:12px;line-height:16px;color:#000;width:48px;text-align:right;">0</div>
<div style="left:893px;top:666px;font-size:12px;line-height:16px;color:#000;width:48px;text-align:right;">0</div>
<div style="left:944px;top:666px;font-size:12px;line-height:16px;color:#000;width:48px;text-align:right;">14.881</div>
<div style="left:995px;top:666px;font-size:12px;line-height:16px;color:#000;width:48px;text-align:right;">0</div>
<div style="left:1046px;top:666px;font-size:12px;line-height:16px;color:#000;width:48px;text-align:right;">0</div>
<div style="left:1097px;top:666px;font-size:12px;line-height:16px;color:#000;width:63px;text-align:right;">0</div>
<div style="left:536px;top:683px;font-size:12px;line-height:16px;color:#000;width:45px;text-align:right;">1.754</div>
<div style="left:587px;top:683px;font-size:12px;line-height:16px;color:#000;width:45px;text-align:right;">6.292</div>
<div style="left:638px;top:683px;font-size:12px;line-height:16px;color:#000;width:45px;text-align:right;">516</div>
<div style="left:689px;top:683px;font-size:12px;line-height:16px;color:#000;width:45px;text-align:right;">442</div>
<div style="left:740px;top:683px;font-size:12px;line-height:16px;color:#000;width:45px;text-align:right;">292</div>
<div style="left:791px;top:683px;font-size:12px;line-height:16px;color:#000;width:45px;text-align:right;">292</div>
<div style="left:842px;top:683px;font-size:12px;line-height:16px;color:#000;width:45px;text-align:right;">322</div>
<div style="left:893px;top:683px;font-size:12px;line-height:16px;color:#000;width:45px;text-align:right;">714</div>
<div style="left:944px;top:683px;font-size:12px;line-height:16px;color:#000;width:45px;text-align:right;">15.195</div>
<div style="left:995px;top:683px;font-size:12px;line-height:16px;color:#000;width:45px;text-align:right;">710</div>
<div style="left:1046px;top:683px;font-size:12px;line-height:16px;color:#000;width:45px;text-align:right;">920</div>
<div style="left:1097px;top:683px;font-size:12px;line-height:16px;color:#000;width:60px;text-align:right;">3.364</div>
<div style="left:536px;top:700px;font-size:12px;line-height:16px;color:#000;width:45px;text-align:right;">2.246</div>
<div style="left:587px;top:700px;font-size:12px;line-height:16px;color:#e81020;width:45px;text-align:right;">-1.292</div>
<div style="left:638px;top:700px;font-size:12px;line-height:16px;color:#e81020;width:45px;text-align:right;">-516</div>
<div style="left:689px;top:700px;font-size:12px;line-height:16px;color:#000;width:45px;text-align:right;">9.558</div>
<div style="left:740px;top:700px;font-size:12px;line-height:16px;color:#000;width:45px;text-align:right;">7.468</div>
<div style="left:791px;top:700px;font-size:12px;line-height:16px;color:#e81020;width:45px;text-align:right;">-292</div>
<div style="left:842px;top:700px;font-size:12px;line-height:16px;color:#000;width:45px;text-align:right;">9.678</div>
<div style="left:893px;top:700px;font-size:12px;line-height:16px;color:#e81020;width:45px;text-align:right;">-714</div>
<div style="left:944px;top:700px;font-size:12px;line-height:16px;color:#e81020;width:45px;text-align:right;">-195</div>
<div style="left:995px;top:700px;font-size:12px;line-height:16px;color:#e81020;width:45px;text-align:right;">-710</div>
<div style="left:1046px;top:700px;font-size:12px;line-height:16px;color:#e81020;width:45px;text-align:right;">-820</div>
<div style="left:1097px;top:700px;font-size:12px;line-height:16px;color:#e81020;width:60px;text-align:right;">-484</div>
<div style="left:1189px;top:190px;font-size:12px;line-height:16px;color:#000;width:48px;text-align:right;">4.000</div>
<div style="left:1189px;top:207px;font-size:12px;line-height:16px;color:#000;width:48px;text-align:right;">0</div>
<div style="left:1189px;top:224px;font-size:12px;line-height:16px;color:#000;width:48px;text-align:right;">0</div>
<div style="left:1189px;top:241px;font-size:12px;line-height:16px;color:#000;width:48px;text-align:right;">0</div>
<div style="left:1189px;top:258px;font-size:12px;line-height:16px;color:#000;width:48px;text-align:right;">0</div>
<div style="left:1189px;top:275px;font-size:12px;line-height:16px;color:#000;width:48px;text-align:right;">0</div>
<div style="left:1189px;top:292px;font-size:12px;line-height:16px;color:#000;width:45px;text-align:right;">4.000</div>
<div style="left:1189px;top:309px;font-size:12px;line-height:16px;color:#000;width:48px;text-align:right;">0</div>
<div style="left:1189px;top:326px;font-size:12px;line-height:16px;color:#000;width:48px;text-align:right;">0</div>
<div style="left:1189px;top:343px;font-size:12px;line-height:16px;color:#000;width:48px;text-align:right;">0</div>
<div style="left:1189px;top:360px;font-size:12px;line-height:16px;color:#000;width:48px;text-align:right;">0</div>
<div style="left:1189px;top:377px;font-size:12px;line-height:16px;color:#000;width:48px;text-align:right;">0</div>
<div style="left:1189px;top:394px;font-size:12px;line-height:16px;color:#000;width:48px;text-align:right;">0</div>
<div style="left:1189px;top:411px;font-size:12px;line-height:16px;color:#000;width:48px;text-align:right;">0</div>
<div style="left:1189px;top:428px;font-size:12px;line-height:16px;color:#000;width:48px;text-align:right;">0</div>
<div style="left:1189px;top:445px;font-size:12px;line-height:16px;color:#000;width:48px;text-align:right;">0</div>
<div style="left:1189px;top:462px;font-size:12px;line-height:16px;color:#000;width:48px;text-align:right;">0</div>
<div style="left:1189px;top:479px;font-size:12px;line-height:16px;color:#000;width:48px;text-align:right;">0</div>
<div style="left:1189px;top:496px;font-size:12px;line-height:16px;color:#000;width:48px;text-align:right;">0</div>
<div style="left:1189px;top:513px;font-size:12px;line-height:16px;color:#000;width:48px;text-align:right;">0</div>
<div style="left:1189px;top:530px;font-size:12px;line-height:16px;color:#000;width:48px;text-align:right;">0</div>
<div style="left:1189px;top:547px;font-size:12px;line-height:16px;color:#000;width:48px;text-align:right;">0</div>
<div style="left:1189px;top:564px;font-size:12px;line-height:16px;color:#000;width:48px;text-align:right;">0</div>
<div style="left:1189px;top:581px;font-size:12px;line-height:16px;color:#000;width:48px;text-align:right;">1.450</div>
<div style="left:1189px;top:598px;font-size:12px;line-height:16px;color:#000;width:48px;text-align:right;">0</div>
<div style="left:1189px;top:615px;font-size:12px;line-height:16px;color:#000;width:48px;text-align:right;">0</div>
<div style="left:1189px;top:632px;font-size:12px;line-height:16px;color:#000;width:48px;text-align:right;">292</div>
<div style="left:1189px;top:649px;font-size:12px;line-height:16px;color:#000;width:48px;text-align:right;">12</div>
<div style="left:1189px;top:666px;font-size:12px;line-height:16px;color:#000;width:48px;text-align:right;">0</div>
<div style="left:1189px;top:683px;font-size:12px;line-height:16px;color:#000;width:45px;text-align:right;">1.754</div>
<div style="left:1189px;top:700px;font-size:12px;line-height:16px;color:#000;width:45px;text-align:right;">2.246</div>
<div style="left:1256px;top:190px;font-size:12px;line-height:16px;color:#000;">9</div>
<div style="left:1256px;top:292px;font-size:12px;line-height:16px;color:#000;">9.</div>
<div style="left:1256px;top:326px;font-size:12px;line-height:16px;color:#000;">6</div>
<div style="left:1256px;top:581px;font-size:12px;line-height:16px;color:#000;">1</div>
<div style="left:1256px;top:683px;font-size:12px;line-height:16px;color:#000;">8.</div>
<div style="left:379px;top:139px;font-size:11px;line-height:16px;color:#000;font-weight:bold;width:135px;text-align:center;padding-top:0.5px">Jahresübersicht</div>
<div style="left:379px;top:156px;font-size:12px;line-height:16px;color:#000;font-weight:bold;width:135px;text-align:center;">2018</div>
<div style="left:379px;top:173px;font-size:12px;line-height:16px;color:#fff;font-weight:bold;width:98px;text-align:center;">Summe</div>
<div style="left:478px;top:173px;font-size:12px;line-height:16px;color:#fff;font-weight:bold;width:36px;text-align:center;">%</div>
<div style="left:536px;top:139px;font-size:11.5px;line-height:16px;color:#000;font-weight:bold;width:626px;text-align:center;">Monatsübersicht</div>
<div style="left:536px;top:156px;font-size:12px;line-height:16px;color:#000;font-weight:bold;width:626px;text-align:center;">2018</div>
<div style="left:536px;top:173px;font-size:12px;line-height:16px;color:#fff;width:50px;text-align:center;">1</div>
<div style="left:587px;top:173px;font-size:12px;line-height:16px;color:#fff;width:50px;text-align:center;">2</div>
<div style="left:638px;top:173px;font-size:12px;line-height:16px;color:#fff;width:50px;text-align:center;">3</div>
<div style="left:689px;top:173px;font-size:12px;line-height:16px;color:#fff;width:50px;text-align:center;">4</div>
<div style="left:740px;top:173px;font-size:12px;line-height:16px;color:#fff;width:50px;text-align:center;">5</div>
<div style="left:791px;top:173px;font-size:12px;line-height:16px;color:#fff;width:50px;text-align:center;">6</div>
<div style="left:842px;top:173px;font-size:12px;line-height:16px;color:#fff;width:50px;text-align:center;">7</div>
<div style="left:893px;top:173px;font-size:12px;line-height:16px;color:#fff;width:50px;text-align:center;">8</div>
<div style="left:944px;top:173px;font-size:12px;line-height:16px;color:#fff;width:50px;text-align:center;">9</div>
<div style="left:995px;top:173px;font-size:12px;line-height:16px;color:#fff;width:50px;text-align:center;">10</div>
<div style="left:1046px;top:173px;font-size:12px;line-height:16px;color:#fff;width:50px;text-align:center;">11</div>
<div style="left:1097px;top:173px;font-size:12px;line-height:16px;color:#fff;width:65px;text-align:center;">12</div>
<div style="left:1189px;top:173px;font-size:12px;line-height:16px;color:#fff;width:50px;text-align:center;">1</div>
<div style="left:1262px;top:173px;font-size:12px;line-height:16px;color:#fff;">2</div>
<div style="left:377px;top:153px;width:139px;height:20px;border:2px solid #217346;box-sizing:border-box"></div>
<div style="left:379px;top:155px;width:135px;height:16px;border:1px solid #ffffff;box-sizing:border-box"></div>
<div style="left:511px;top:168px;width:6px;height:6px;background:#217346;outline:1px solid #fff"></div>
<div style="left:1264px;top:138px;width:1px;height:633px;background:#bdbdbd"></div>
<div style="left:1264px;top:118px;width:1px;height:19px;background:#e0e0e0"></div>
<div style="left:1265px;top:118px;width:19px;height:653px;background:#e2e2e2"></div>
<div style="left:1268px;top:120px;width:15px;height:15px;background:#f0f0f0;border:1px solid #ababab;box-sizing:border-box"></div>
<svg style="left:1270px;top:124px;" width="11" height="7" viewBox="0 0 11 7"><path d="M1 6H10L5.5 1.5Z" fill="#6a6a6a"/></svg>
<div style="left:1268px;top:135px;width:15px;height:610px;background:#f0f0f0;border:1px solid #ababab;box-sizing:border-box"></div>
<div style="left:1268px;top:745px;width:15px;height:12px;background:#d4d4d4"></div>
<div style="left:1268px;top:757px;width:15px;height:15px;background:#f0f0f0;border:1px solid #ababab;box-sizing:border-box"></div>
<svg style="left:1270px;top:761px;" width="11" height="7" viewBox="0 0 11 7"><path d="M1 1H10L5.5 5.5Z" fill="#6a6a6a"/></svg>
<div style="left:1px;top:771px;width:1283px;height:28px;background:#dcdcdc"></div>
<div style="left:1px;top:771px;width:1283px;height:1px;background:#a9a9a9"></div>
<div style="left:1px;top:799px;width:1283px;height:1px;background:#c0c0c0"></div>
<svg style="left:26px;top:780px;" width="6" height="9" viewBox="0 0 6 9"><path d="M5.5 0.5V8.5L0.5 4.5Z" fill="#1e5a33"/></svg>
<svg style="left:56px;top:780px;" width="6" height="9" viewBox="0 0 6 9"><path d="M0.5 0.5V8.5L5.5 4.5Z" fill="#b8b8b8"/></svg>
<div style="left:81px;top:787px;width:2px;height:2px;background:#1e5a33"></div>
<div style="left:85px;top:787px;width:2px;height:2px;background:#1e5a33"></div>
<div style="left:89px;top:787px;width:2px;height:2px;background:#1e5a33"></div>
<div style="left:103px;top:774px;width:69px;height:22px;background:#f2f200"></div>
<div id="t44" style="letter-spacing:-0.430px;left:103px;top:777px;font-size:12.5px;line-height:17px;color:#000;width:69px;text-align:center;">ESt.Zahl</div>
<div style="left:177px;top:774px;width:122px;height:22px;background:#f2f200"></div>
<div id="t45" style="letter-spacing:-0.148px;left:177px;top:777px;font-size:12.5px;line-height:17px;color:#000;width:122px;text-align:center;">Sonst.Leist.Entn.</div>
<div style="left:304px;top:774px;width:96px;height:22px;background:#f2f200"></div>
<div id="t46" style="letter-spacing:0.247px;left:304px;top:777px;font-size:12.5px;line-height:17px;color:#000;width:96px;text-align:center;">Kfz-Nutzung</div>
<div style="left:405px;top:774px;width:109px;height:22px;background:#f2f200"></div>
<div id="t47" style="letter-spacing:0.240px;left:405px;top:777px;font-size:12.5px;line-height:17px;color:#000;width:109px;text-align:center;">Arbeitszimmer</div>
<div style="left:519px;top:774px;width:67px;height:22px;background:#0f6ac0"></div>
<div id="t48" style="letter-spacing:0.301px;left:519px;top:777px;font-size:12.5px;line-height:17px;color:#fff;width:67px;text-align:center;">pr.Ausg</div>
<div style="left:591px;top:774px;width:93px;height:22px;background:#8cc850"></div>
<div id="t49" style="letter-spacing:0.061px;left:591px;top:777px;font-size:12.5px;line-height:17px;color:#000;width:93px;text-align:center;">USt.Voranm</div>
<div style="left:689px;top:774px;width:79px;height:22px;background:#8cc850"></div>
<div id="t50" style="letter-spacing:-0.245px;left:689px;top:777px;font-size:12.5px;line-height:17px;color:#000;width:79px;text-align:center;">USt.Erklär</div>
<div style="left:827px;top:774px;width:42px;height:22px;background:#8cc850"></div>
<div id="t51" style="letter-spacing:-1.135px;left:827px;top:777px;font-size:12.5px;line-height:17px;color:#000;width:42px;text-align:center;">EÜR</div>
<div style="left:100px;top:775px;width:1px;height:20px;background:#9a9a9a"></div>
<div style="left:174px;top:775px;width:1px;height:20px;background:#9a9a9a"></div>
<div style="left:301px;top:775px;width:1px;height:20px;background:#9a9a9a"></div>
<div style="left:402px;top:775px;width:1px;height:20px;background:#9a9a9a"></div>
<div style="left:516px;top:775px;width:1px;height:20px;background:#9a9a9a"></div>
<div style="left:588px;top:775px;width:1px;height:20px;background:#9a9a9a"></div>
<div style="left:686px;top:775px;width:1px;height:20px;background:#9a9a9a"></div>
<div style="left:871px;top:775px;width:1px;height:20px;background:#9a9a9a"></div>
<div style="left:770px;top:771px;width:56px;height:26px;background:linear-gradient(#efefef 0%,#eef2ee 50%,#d4ecd8 100%);border-left:1px solid #a9a9a9;border-right:1px solid #a9a9a9;box-sizing:border-box"></div>
<div style="left:770px;top:794px;width:56px;height:2px;background:#217346"></div>
<div id="t52" style="letter-spacing:-0.448px;left:770px;top:777px;font-size:13px;line-height:17px;color:#217346;font-weight:bold;width:56px;text-align:center;">BWA</div>
<svg style="left:905px;top:777px;" width="16" height="16" viewBox="0 0 16 16"><circle cx="8" cy="8" r="7" fill="none" stroke="#6a6a6a" stroke-width="1.2"/><path d="M8 4V12M4 8H12" stroke="#6a6a6a" stroke-width="1.6"/></svg>
<div style="left:982px;top:780px;width:2px;height:2px;background:#a8a8a8"></div>
<div style="left:982px;top:784px;width:2px;height:2px;background:#a8a8a8"></div>
<div style="left:982px;top:788px;width:2px;height:2px;background:#a8a8a8"></div>
<div style="left:999px;top:778px;width:251px;height:15px;background:#d4d4d4"></div>
<div style="left:999px;top:778px;width:15px;height:15px;background:#f0f0f0;border:1px solid #ababab;box-sizing:border-box"></div>
<svg style="left:1003px;top:781px;" width="7" height="9" viewBox="0 0 7 9"><path d="M5.5 0.5V8.5L1 4.5Z" fill="#6a6a6a"/></svg>
<div style="left:1014px;top:778px;width:195px;height:15px;background:#efefef;border:1px solid #ababab;box-sizing:border-box"></div>
<div style="left:1252px;top:778px;width:15px;height:15px;background:#f0f0f0;border:1px solid #ababab;box-sizing:border-box"></div>
<svg style="left:1256px;top:781px;" width="7" height="9" viewBox="0 0 7 9"><path d="M1.5 0.5V8.5L6 4.5Z" fill="#6a6a6a"/></svg>
<div style="left:1px;top:800px;width:1283px;height:19px;background:#e8e8e8"></div>
<div id="t53" style="letter-spacing:-0.393px;left:8px;top:803px;font-size:12px;line-height:17px;color:#444;">Bereit</div>
<div style="left:986px;top:800px;width:38px;height:19px;background:#c8c8c8"></div>
<svg style="left:997px;top:802px;" width="15" height="15" viewBox="0 0 15 15"><path d="M1.5 1.5H13.5V13.5H1.5ZM5.5 1.5V13.5M9.5 1.5V13.5M1.5 5.5H13.5M1.5 9.5H13.5" fill="none" stroke="#6a6a6a" stroke-width="1.4"/></svg>
<svg style="left:1035px;top:802px;" width="16" height="15" viewBox="0 0 16 15"><rect x="1.5" y="1.5" width="13" height="12" fill="none" stroke="#6a6a6a" stroke-width="1.3"/><rect x="4.5" y="3.5" width="7" height="8" fill="none" stroke="#6a6a6a" stroke-width="1.1"/><path d="M6 5.5H10M6 7.5H10M6 9.5H10" stroke="#6a6a6a" stroke-width="1"/></svg>
<svg style="left:1073px;top:802px;" width="16" height="15" viewBox="0 0 16 15"><rect x="1.5" y="1.5" width="13" height="12" fill="none" stroke="#6a6a6a" stroke-width="1.3"/><path d="M1.5 8.5H9.5V1.5M5.5 1.5V8.5" fill="none" stroke="#6a6a6a" stroke-width="1.2"/></svg>
<div style="left:1105px;top:809px;width:6px;height:2px;background:#555"></div>
<div style="left:1115px;top:809px;width:101px;height:1px;background:#8a8a8a"></div>
<div style="left:1163px;top:804px;width:4px;height:11px;background:#555"></div>
<div style="left:1218px;top:809px;width:8px;height:2px;background:#555"></div>
<div style="left:1221px;top:806px;width:2px;height:8px;background:#555"></div>
<div id="t54" style="letter-spacing:-0.722px;left:1237px;top:803px;font-size:11.5px;line-height:17px;color:#3a3a3a;">100 %</div>
</body></html>
